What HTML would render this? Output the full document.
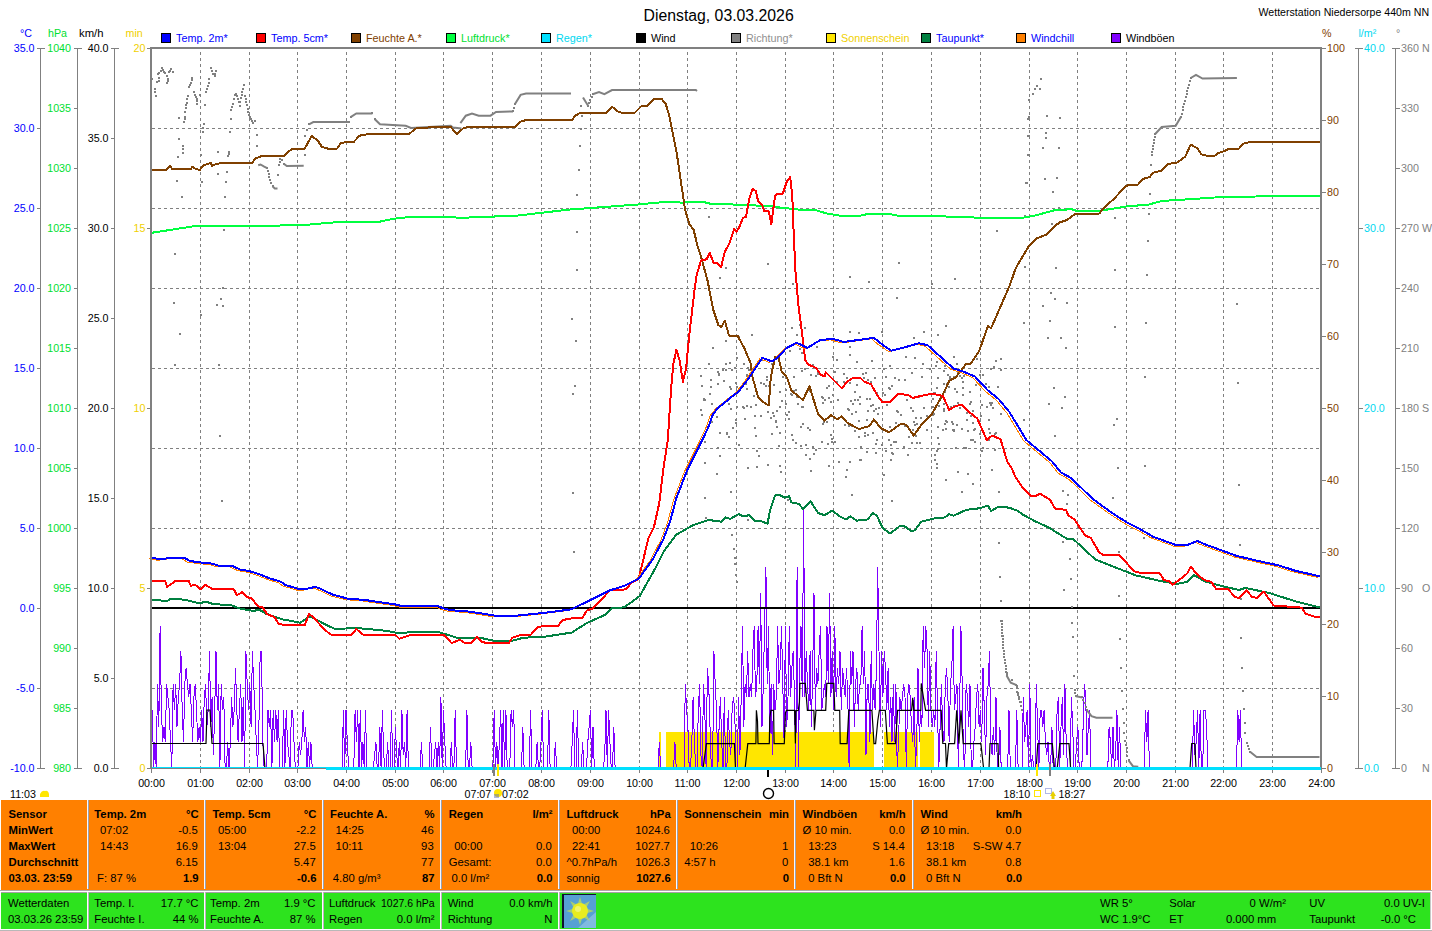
<!DOCTYPE html>
<html><head><meta charset="utf-8"><title>Wetterstation Niedersorpe</title>
<style>html,body{margin:0;padding:0;background:#fff;} body{width:1432px;height:931px;overflow:hidden;position:relative;} svg{position:absolute;left:0;top:0;}</style>
</head><body>
<svg width="1432" height="931" viewBox="0 0 1432 931">
<g shape-rendering="crispEdges">
<rect x="1" y="800" width="1430" height="90" fill="#FF8000"/>
<rect x="87" y="800" width="1" height="89" fill="#F8F8FF"/>
<rect x="88" y="800" width="1" height="89" fill="#98A0B0"/>
<rect x="204" y="800" width="1" height="89" fill="#F8F8FF"/>
<rect x="205" y="800" width="1" height="89" fill="#98A0B0"/>
<rect x="322" y="800" width="1" height="89" fill="#F8F8FF"/>
<rect x="323" y="800" width="1" height="89" fill="#98A0B0"/>
<rect x="440" y="800" width="1" height="89" fill="#F8F8FF"/>
<rect x="441" y="800" width="1" height="89" fill="#98A0B0"/>
<rect x="558" y="800" width="1" height="89" fill="#F8F8FF"/>
<rect x="559" y="800" width="1" height="89" fill="#98A0B0"/>
<rect x="676" y="800" width="1" height="89" fill="#F8F8FF"/>
<rect x="677" y="800" width="1" height="89" fill="#98A0B0"/>
<rect x="794" y="800" width="1" height="89" fill="#F8F8FF"/>
<rect x="795" y="800" width="1" height="89" fill="#98A0B0"/>
<rect x="912" y="800" width="1" height="89" fill="#F8F8FF"/>
<rect x="913" y="800" width="1" height="89" fill="#98A0B0"/>
<rect x="0" y="890" width="1432" height="1" fill="#B0A8A8"/>
<rect x="0" y="891" width="1432" height="40" fill="#FFFFFF"/>
<rect x="0" y="930" width="1432" height="1" fill="#B8B8B8"/>
<rect x="1" y="892" width="86" height="1" fill="#A8A0A8"/>
<rect x="1" y="893" width="86" height="36" fill="#2DE31E"/>
<rect x="89" y="892" width="115" height="1" fill="#A8A0A8"/>
<rect x="89" y="893" width="115" height="36" fill="#2DE31E"/>
<rect x="206" y="892" width="116" height="1" fill="#A8A0A8"/>
<rect x="206" y="893" width="116" height="36" fill="#2DE31E"/>
<rect x="324" y="892" width="116" height="1" fill="#A8A0A8"/>
<rect x="324" y="893" width="116" height="36" fill="#2DE31E"/>
<rect x="442" y="892" width="116" height="1" fill="#A8A0A8"/>
<rect x="442" y="893" width="116" height="36" fill="#2DE31E"/>
<rect x="560" y="892" width="870" height="1" fill="#A8A0A8"/>
<rect x="560" y="893" width="870" height="36" fill="#2DE31E"/>
<rect x="88" y="892" width="1" height="37" fill="#C0B0C0"/>
<rect x="205" y="892" width="1" height="37" fill="#C0B0C0"/>
<rect x="323" y="892" width="1" height="37" fill="#C0B0C0"/>
<rect x="441" y="892" width="1" height="37" fill="#C0B0C0"/>
<rect x="559" y="892" width="1" height="37" fill="#C0B0C0"/>
<rect x="1430" y="892" width="1" height="37" fill="#C8C8C8"/>
</g>
<g font-family='"Liberation Sans", sans-serif' fill="#000">
<text x="8.5" y="818" text-anchor="start" font-size="11.3" font-weight="bold">Sensor</text>
<text x="8.5" y="834" text-anchor="start" font-size="11.3" font-weight="bold">MinWert</text>
<text x="8.5" y="850" text-anchor="start" font-size="11.3" font-weight="bold">MaxWert</text>
<text x="8.5" y="866" text-anchor="start" font-size="11.3" font-weight="bold">Durchschnitt</text>
<text x="8.5" y="882" text-anchor="start" font-size="11.3" font-weight="bold">03.03. 23:59</text>
<text x="94.3" y="818" text-anchor="start" font-size="11.3" font-weight="bold">Temp. 2m</text>
<text x="198.6" y="818" text-anchor="end" font-size="11.3" font-weight="bold">°C</text>
<text x="99.89999999999999" y="834" text-anchor="start" font-size="11.3">07:02</text>
<text x="197.79999999999998" y="834" text-anchor="end" font-size="11.3">-0.5</text>
<text x="99.89999999999999" y="850" text-anchor="start" font-size="11.3">14:43</text>
<text x="197.79999999999998" y="850" text-anchor="end" font-size="11.3">16.9</text>
<text x="197.79999999999998" y="866" text-anchor="end" font-size="11.3">6.15</text>
<text x="97.1" y="882" text-anchor="start" font-size="11.3">F: 87 %</text>
<text x="198.6" y="882" text-anchor="end" font-size="11.3" font-weight="bold">1.9</text>
<text x="212.4" y="818" text-anchor="start" font-size="11.3" font-weight="bold">Temp. 5cm</text>
<text x="316.5" y="818" text-anchor="end" font-size="11.3" font-weight="bold">°C</text>
<text x="218.0" y="834" text-anchor="start" font-size="11.3">05:00</text>
<text x="315.7" y="834" text-anchor="end" font-size="11.3">-2.2</text>
<text x="218.0" y="850" text-anchor="start" font-size="11.3">13:04</text>
<text x="315.7" y="850" text-anchor="end" font-size="11.3">27.5</text>
<text x="315.7" y="866" text-anchor="end" font-size="11.3">5.47</text>
<text x="316.5" y="882" text-anchor="end" font-size="11.3" font-weight="bold">-0.6</text>
<text x="330" y="818" text-anchor="start" font-size="11.3" font-weight="bold">Feuchte A.</text>
<text x="434.5" y="818" text-anchor="end" font-size="11.3" font-weight="bold">%</text>
<text x="335.6" y="834" text-anchor="start" font-size="11.3">14:25</text>
<text x="433.7" y="834" text-anchor="end" font-size="11.3">46</text>
<text x="335.6" y="850" text-anchor="start" font-size="11.3">10:11</text>
<text x="433.7" y="850" text-anchor="end" font-size="11.3">93</text>
<text x="433.7" y="866" text-anchor="end" font-size="11.3">77</text>
<text x="332.8" y="882" text-anchor="start" font-size="11.3">4.80 g/m³</text>
<text x="434.5" y="882" text-anchor="end" font-size="11.3" font-weight="bold">87</text>
<text x="448.7" y="818" text-anchor="start" font-size="11.3" font-weight="bold">Regen</text>
<text x="552.5" y="818" text-anchor="end" font-size="11.3" font-weight="bold">l/m²</text>
<text x="454.3" y="850" text-anchor="start" font-size="11.3">00:00</text>
<text x="551.7" y="850" text-anchor="end" font-size="11.3">0.0</text>
<text x="448.7" y="866" text-anchor="start" font-size="11.3">Gesamt:</text>
<text x="551.7" y="866" text-anchor="end" font-size="11.3">0.0</text>
<text x="451.5" y="882" text-anchor="start" font-size="11.3">0.0 l/m²</text>
<text x="552.5" y="882" text-anchor="end" font-size="11.3" font-weight="bold">0.0</text>
<text x="566.4" y="818" text-anchor="start" font-size="11.3" font-weight="bold">Luftdruck</text>
<text x="670.7" y="818" text-anchor="end" font-size="11.3" font-weight="bold">hPa</text>
<text x="572.0" y="834" text-anchor="start" font-size="11.3">00:00</text>
<text x="669.9000000000001" y="834" text-anchor="end" font-size="11.3">1024.6</text>
<text x="572.0" y="850" text-anchor="start" font-size="11.3">22:41</text>
<text x="669.9000000000001" y="850" text-anchor="end" font-size="11.3">1027.7</text>
<text x="566.4" y="866" text-anchor="start" font-size="11.3">^0.7hPa/h</text>
<text x="669.9000000000001" y="866" text-anchor="end" font-size="11.3">1026.3</text>
<text x="566.4" y="882" text-anchor="start" font-size="11.3">sonnig</text>
<text x="670.7" y="882" text-anchor="end" font-size="11.3" font-weight="bold">1027.6</text>
<text x="684.2" y="818" text-anchor="start" font-size="11.3" font-weight="bold">Sonnenschein</text>
<text x="789" y="818" text-anchor="end" font-size="11.3" font-weight="bold">min</text>
<text x="689.8000000000001" y="850" text-anchor="start" font-size="11.3">10:26</text>
<text x="788.2" y="850" text-anchor="end" font-size="11.3">1</text>
<text x="684.2" y="866" text-anchor="start" font-size="11.3">4:57 h</text>
<text x="788.2" y="866" text-anchor="end" font-size="11.3">0</text>
<text x="789" y="882" text-anchor="end" font-size="11.3" font-weight="bold">0</text>
<text x="802.6" y="818" text-anchor="start" font-size="11.3" font-weight="bold">Windböen</text>
<text x="905.6" y="818" text-anchor="end" font-size="11.3" font-weight="bold">km/h</text>
<text x="802.6" y="834" text-anchor="start" font-size="11.3">Ø 10 min.</text>
<text x="904.8000000000001" y="834" text-anchor="end" font-size="11.3">0.0</text>
<text x="808.2" y="850" text-anchor="start" font-size="11.3">13:23</text>
<text x="904.8000000000001" y="850" text-anchor="end" font-size="11.3">S 14.4</text>
<text x="808.2" y="866" text-anchor="start" font-size="11.3">38.1 km</text>
<text x="904.8000000000001" y="866" text-anchor="end" font-size="11.3">1.6</text>
<text x="808.2" y="882" text-anchor="start" font-size="11.3">0 Bft N</text>
<text x="905.6" y="882" text-anchor="end" font-size="11.3" font-weight="bold">0.0</text>
<text x="920.5" y="818" text-anchor="start" font-size="11.3" font-weight="bold">Wind</text>
<text x="1022" y="818" text-anchor="end" font-size="11.3" font-weight="bold">km/h</text>
<text x="920.5" y="834" text-anchor="start" font-size="11.3">Ø 10 min.</text>
<text x="1021.2" y="834" text-anchor="end" font-size="11.3">0.0</text>
<text x="926.1" y="850" text-anchor="start" font-size="11.3">13:18</text>
<text x="1021.2" y="850" text-anchor="end" font-size="11.3">S-SW 4.7</text>
<text x="926.1" y="866" text-anchor="start" font-size="11.3">38.1 km</text>
<text x="1021.2" y="866" text-anchor="end" font-size="11.3">0.8</text>
<text x="926.1" y="882" text-anchor="start" font-size="11.3">0 Bft N</text>
<text x="1022" y="882" text-anchor="end" font-size="11.3" font-weight="bold">0.0</text>
<text x="8" y="907" text-anchor="start" font-size="11.3">Wetterdaten</text>
<text x="8" y="922.5" text-anchor="start" font-size="11.3">03.03.26 23:59</text>
<text x="94.3" y="907" text-anchor="start" font-size="11.3">Temp. I.</text>
<text x="198.5" y="907" text-anchor="end" font-size="11.3">17.7 °C</text>
<text x="94.3" y="922.5" text-anchor="start" font-size="11.3">Feuchte I.</text>
<text x="198.5" y="922.5" text-anchor="end" font-size="11.3">44 %</text>
<text x="210" y="907" text-anchor="start" font-size="11.3">Temp. 2m</text>
<text x="315.5" y="907" text-anchor="end" font-size="11.3">1.9 °C</text>
<text x="210" y="922.5" text-anchor="start" font-size="11.3">Feuchte A.</text>
<text x="315.5" y="922.5" text-anchor="end" font-size="11.3">87 %</text>
<text x="329" y="907" text-anchor="start" font-size="11.3">Luftdruck</text>
<text x="381" y="907" font-size="11.3" textLength="53.5" lengthAdjust="spacingAndGlyphs">1027.6 hPa</text>
<text x="329" y="922.5" text-anchor="start" font-size="11.3">Regen</text>
<text x="434.5" y="922.5" text-anchor="end" font-size="11.3">0.0 l/m²</text>
<text x="447.7" y="907" text-anchor="start" font-size="11.3">Wind</text>
<text x="552.5" y="907" text-anchor="end" font-size="11.3">0.0 km/h</text>
<text x="447.7" y="922.5" text-anchor="start" font-size="11.3">Richtung</text>
<text x="552.5" y="922.5" text-anchor="end" font-size="11.3">N</text>
<text x="1100" y="907" text-anchor="start" font-size="11.3">WR 5°</text>
<text x="1100" y="922.5" text-anchor="start" font-size="11.3">WC 1.9°C</text>
<text x="1169.2" y="907" text-anchor="start" font-size="11.3">Solar</text>
<text x="1286" y="907" text-anchor="end" font-size="11.3">0 W/m²</text>
<text x="1169.2" y="922.5" text-anchor="start" font-size="11.3">ET</text>
<text x="1276.2" y="922.5" text-anchor="end" font-size="11.3">0.000 mm</text>
<text x="1309.3" y="907" text-anchor="start" font-size="11.3">UV</text>
<text x="1424.8" y="907" text-anchor="end" font-size="11.3">0.0 UV-I</text>
<text x="1309.3" y="922.5" text-anchor="start" font-size="11.3">Taupunkt</text>
<text x="1416" y="922.5" text-anchor="end" font-size="11.3">-0.0 °C</text>
</g>
<g>
<rect x="562" y="894" width="34" height="34" fill="#56A0D4"/><path d="M596,912 L596,928 L578,928 Z" fill="#9CCBEA" opacity="0.6"/>
<rect x="562" y="894" width="2" height="34" fill="#101030"/>
<rect x="562" y="894" width="34" height="1" fill="#101030"/>
<polygon points="580.0,897.0 582.5,905.0 589.9,901.1 586.0,908.5 594.0,911.0 586.0,913.5 589.9,920.9 582.5,917.0 580.0,925.0 577.5,917.0 570.1,920.9 574.0,913.5 566.0,911.0 574.0,908.5 570.1,901.1 577.5,905.0" fill="#B8D860" opacity="0.8"/>
<circle cx="580" cy="911" r="8" fill="#E8EC20"/>
<circle cx="578" cy="909" r="3" fill="#F4F890" opacity="0.7"/>
</g>
<g stroke="#808080" stroke-width="1" shape-rendering="crispEdges" stroke-dasharray="3 3">
<line x1="152" y1="128.5" x2="1320" y2="128.5"/>
<line x1="152" y1="208.5" x2="1320" y2="208.5"/>
<line x1="152" y1="288.5" x2="1320" y2="288.5"/>
<line x1="152" y1="368.5" x2="1320" y2="368.5"/>
<line x1="152" y1="448.5" x2="1320" y2="448.5"/>
<line x1="152" y1="528.5" x2="1320" y2="528.5"/>
<line x1="152" y1="608.5" x2="1320" y2="608.5"/>
<line x1="152" y1="688.5" x2="1320" y2="688.5"/>
<line x1="200.5" y1="52" x2="200.5" y2="773"/>
<line x1="249.5" y1="52" x2="249.5" y2="773"/>
<line x1="297.5" y1="52" x2="297.5" y2="773"/>
<line x1="346.5" y1="52" x2="346.5" y2="773"/>
<line x1="395.5" y1="52" x2="395.5" y2="773"/>
<line x1="443.5" y1="52" x2="443.5" y2="773"/>
<line x1="492.5" y1="52" x2="492.5" y2="773"/>
<line x1="541.5" y1="52" x2="541.5" y2="773"/>
<line x1="590.5" y1="52" x2="590.5" y2="773"/>
<line x1="639.5" y1="52" x2="639.5" y2="773"/>
<line x1="687.5" y1="52" x2="687.5" y2="773"/>
<line x1="736.5" y1="52" x2="736.5" y2="773"/>
<line x1="785.5" y1="52" x2="785.5" y2="773"/>
<line x1="833.5" y1="52" x2="833.5" y2="773"/>
<line x1="882.5" y1="52" x2="882.5" y2="773"/>
<line x1="931.5" y1="52" x2="931.5" y2="773"/>
<line x1="980.5" y1="52" x2="980.5" y2="773"/>
<line x1="1029.5" y1="52" x2="1029.5" y2="773"/>
<line x1="1077.5" y1="52" x2="1077.5" y2="773"/>
<line x1="1126.5" y1="52" x2="1126.5" y2="773"/>
<line x1="1175.5" y1="52" x2="1175.5" y2="773"/>
<line x1="1223.5" y1="52" x2="1223.5" y2="773"/>
<line x1="1272.5" y1="52" x2="1272.5" y2="773"/>
</g>
<g fill="#FFE600" shape-rendering="crispEdges">
<rect x="659" y="732" width="2" height="36"/>
<rect x="666" y="732" width="208" height="36"/>
<rect x="884" y="732" width="34" height="36"/>
<rect x="920" y="732" width="14" height="36"/>
</g>
<polyline fill="none" stroke="#8000FF" stroke-width="1" shape-rendering="crispEdges" points="151.0,742.0 152.3,710.0 153.6,768.0 154.9,742.0 156.2,768.0 157.5,684.0 158.8,727.0 160.1,626.0 161.4,710.0 162.7,742.0 164.0,727.0 165.3,742.0 166.6,684.0 167.9,697.0 169.2,710.0 170.5,742.0 171.8,768.0 173.1,684.0 174.4,710.0 175.7,684.0 177.0,727.0 178.3,697.0 179.6,684.0 180.9,651.0 182.2,710.0 183.5,742.0 184.8,684.0 186.1,668.0 187.4,684.0 188.7,697.0 190.0,684.0 191.3,710.0 192.6,742.0 193.9,697.0 195.2,684.0 196.5,710.0 197.8,742.0 199.1,727.0 200.4,742.0 201.7,710.0 203.0,742.0 204.3,697.0 205.6,684.0 206.9,727.0 208.2,710.0 209.5,651.0 210.8,727.0 212.1,697.0 213.4,755.0 214.7,710.0 216.0,651.0 217.3,710.0 218.6,684.0 219.9,768.0 221.2,684.0 222.5,710.0 223.8,697.0 225.1,768.0 226.4,768.0 227.7,742.0 229.0,768.0 230.3,742.0 231.6,697.0 232.9,727.0 234.2,710.0 235.5,668.0 236.8,710.0 238.1,742.0 239.4,710.0 240.7,684.0 242.0,742.0 243.3,697.0 244.6,768.0 245.9,651.0 247.2,684.0 248.5,710.0 249.8,684.0 251.1,727.0 252.4,651.0 253.7,684.0 255.0,710.0 256.3,742.0 257.6,768.0 258.9,727.0 260.2,651.0 261.5,651.0 262.8,742.0 264.1,768.0 265.4,768.0 266.7,768.0 268.0,710.0 269.3,727.0 270.6,710.0 271.9,768.0 273.2,710.0 274.5,742.0 275.8,710.0 277.1,742.0 278.4,710.0 279.7,768.0 281.0,768.0 282.3,768.0 283.6,710.0 284.9,768.0 286.2,710.0 287.5,742.0 288.8,755.0 290.1,768.0 291.4,710.0 292.7,710.0 294.0,742.0 295.3,768.0 296.6,768.0 297.9,768.0 299.2,742.0 300.5,755.0 301.8,742.0 303.1,710.0 304.4,742.0 305.7,727.0 307.0,768.0 308.3,742.0 309.6,768.0 310.9,742.0 312.2,768.0 313.5,768.0 314.8,768.0 316.1,768.0 317.4,768.0 318.7,768.0 320.0,768.0 321.3,768.0 322.6,768.0 323.9,768.0 325.2,768.0 326.5,768.0 327.8,768.0 329.1,768.0 330.4,768.0 331.7,768.0 333.0,768.0 334.3,768.0 335.6,768.0 336.9,768.0 338.2,768.0 339.5,768.0 340.8,768.0 342.1,768.0 343.4,710.0 344.7,768.0 346.0,710.0 347.3,742.0 348.6,768.0 349.9,768.0 351.2,768.0 352.5,768.0 353.8,768.0 355.1,710.0 356.4,742.0 357.7,710.0 359.0,768.0 360.3,710.0 361.6,768.0 362.9,742.0 364.2,768.0 365.5,710.0 366.8,768.0 368.1,768.0 369.4,768.0 370.7,768.0 372.0,768.0 373.3,768.0 374.6,755.0 375.9,742.0 377.2,768.0 378.5,768.0 379.8,727.0 381.1,768.0 382.4,710.0 383.7,755.0 385.0,768.0 386.3,768.0 387.6,742.0 388.9,768.0 390.2,768.0 391.5,710.0 392.8,768.0 394.1,768.0 395.4,727.0 396.7,755.0 398.0,768.0 399.3,742.0 400.6,768.0 401.9,710.0 403.2,755.0 404.5,742.0 405.8,768.0 407.1,710.0 408.4,768.0 409.7,768.0 411.0,768.0 412.3,768.0 413.6,768.0 414.9,768.0 416.2,768.0 417.5,768.0 418.8,768.0 420.1,768.0 421.4,742.0 422.7,768.0 424.0,768.0 425.3,768.0 426.6,768.0 427.9,768.0 429.2,768.0 430.5,727.0 431.8,768.0 433.1,768.0 434.4,755.0 435.7,742.0 437.0,768.0 438.3,742.0 439.6,768.0 440.9,697.0 442.2,768.0 443.5,710.0 444.8,742.0 446.1,768.0 447.4,768.0 448.7,768.0 450.0,768.0 451.3,742.0 452.6,768.0 453.9,768.0 455.2,710.0 456.5,768.0 457.8,768.0 459.1,768.0 460.4,768.0 461.7,768.0 463.0,768.0 464.3,768.0 465.6,768.0 466.9,710.0 468.2,768.0 469.5,768.0 470.8,742.0 472.1,768.0 473.4,768.0 474.7,768.0 476.0,768.0 477.3,768.0 478.6,768.0 479.9,768.0 481.2,768.0 482.5,768.0 483.8,768.0 485.1,768.0 486.4,768.0 487.7,768.0 489.0,768.0 490.3,768.0 491.6,768.0 492.9,768.0 494.2,710.0 495.5,768.0 496.8,742.0 498.1,768.0 499.4,742.0 500.7,710.0 502.0,768.0 503.3,710.0 504.6,768.0 505.9,710.0 507.2,768.0 508.5,768.0 509.8,768.0 511.1,710.0 512.4,727.0 513.7,710.0 515.0,768.0 516.3,768.0 517.6,768.0 518.9,768.0 520.2,768.0 521.5,768.0 522.8,727.0 524.1,768.0 525.4,768.0 526.7,768.0 528.0,768.0 529.3,768.0 530.6,710.0 531.9,768.0 533.2,768.0 534.5,768.0 535.8,768.0 537.1,742.0 538.4,768.0 539.7,768.0 541.0,742.0 542.3,710.0 543.6,768.0 544.9,768.0 546.2,768.0 547.5,768.0 548.8,710.0 550.1,768.0 551.4,768.0 552.7,768.0 554.0,768.0 555.3,742.0 556.6,768.0 557.9,768.0 559.2,768.0 560.5,768.0 561.8,768.0 563.1,768.0 564.4,768.0 565.7,768.0 567.0,768.0 568.3,768.0 569.6,768.0 570.9,768.0 572.2,742.0 573.5,710.0 574.8,768.0 576.1,768.0 577.4,710.0 578.7,768.0 580.0,768.0 581.3,768.0 582.6,742.0 583.9,768.0 585.2,768.0 586.5,768.0 587.8,742.0 589.1,727.0 590.4,710.0 591.7,768.0 593.0,727.0 594.3,768.0 595.6,768.0 596.9,768.0 598.2,768.0 599.5,768.0 600.8,768.0 602.1,768.0 603.4,768.0 604.7,755.0 606.0,710.0 607.3,768.0 608.6,710.0 609.9,742.0 611.2,768.0 612.5,768.0 613.8,727.0 615.1,768.0 616.4,768.0 617.7,768.0 619.0,768.0 620.3,768.0 621.6,768.0 622.9,768.0 624.2,768.0 625.5,768.0 626.8,768.0 628.1,768.0 629.4,768.0 630.7,768.0 632.0,768.0 633.3,768.0 634.6,768.0 635.9,768.0 637.2,768.0 638.5,768.0 639.8,768.0 641.1,768.0 642.4,768.0 643.7,768.0 645.0,768.0 646.3,768.0 647.6,768.0 648.9,768.0 650.2,768.0 651.5,768.0 652.8,768.0 654.1,768.0 655.4,768.0 656.7,768.0 658.0,768.0 659.3,742.0 660.6,768.0 661.9,768.0 663.2,768.0 664.5,768.0 665.8,768.0 667.1,768.0 668.4,768.0 669.7,768.0 671.0,768.0 672.3,768.0 673.6,768.0 674.9,742.0 676.2,768.0 677.5,768.0 678.8,768.0 680.1,768.0 681.4,768.0 682.7,768.0 684.0,768.0 685.3,684.0 686.6,710.0 687.9,727.0 689.2,768.0 690.5,768.0 691.8,742.0 693.1,697.0 694.4,742.0 695.7,768.0 697.0,768.0 698.3,710.0 699.6,684.0 700.9,755.0 702.2,768.0 703.5,684.0 704.8,710.0 706.1,768.0 707.4,668.0 708.7,684.0 710.0,727.0 711.3,768.0 712.6,768.0 713.9,651.0 715.2,684.0 716.5,710.0 717.8,768.0 719.1,727.0 720.4,697.0 721.7,742.0 723.0,768.0 724.3,697.0 725.6,768.0 726.9,768.0 728.2,710.0 729.5,742.0 730.8,755.0 732.1,710.0 733.4,697.0 734.7,710.0 736.0,768.0 737.3,768.0 738.6,697.0 739.9,755.0 741.2,697.0 742.5,626.0 743.8,727.0 745.1,684.0 746.4,697.0 747.7,651.0 749.0,697.0 750.3,684.0 751.6,697.0 752.9,651.0 754.2,626.0 755.5,697.0 756.8,684.0 758.1,626.0 759.4,684.0 760.7,593.0 762.0,727.0 763.3,684.0 764.6,626.0 765.9,567.0 767.2,684.0 768.5,626.0 769.8,742.0 771.1,684.0 772.4,755.0 773.7,684.0 775.0,710.0 776.3,697.0 777.6,626.0 778.9,684.0 780.2,668.0 781.5,626.0 782.8,684.0 784.1,742.0 785.4,626.0 786.7,727.0 788.0,697.0 789.3,626.0 790.6,697.0 791.9,668.0 793.2,651.0 794.5,697.0 795.8,768.0 797.1,567.0 798.4,768.0 799.7,668.0 801.0,626.0 802.3,697.0 803.6,509.0 804.9,697.0 806.2,651.0 807.5,684.0 808.8,710.0 810.1,651.0 811.4,727.0 812.7,668.0 814.0,593.0 815.3,710.0 816.6,668.0 817.9,684.0 819.2,651.0 820.5,626.0 821.8,710.0 823.1,697.0 824.4,684.0 825.7,697.0 827.0,626.0 828.3,684.0 829.6,593.0 830.9,697.0 832.2,651.0 833.5,710.0 834.8,626.0 836.1,697.0 837.4,668.0 838.7,684.0 840.0,651.0 841.3,710.0 842.6,668.0 843.9,684.0 845.2,697.0 846.5,668.0 847.8,697.0 849.1,768.0 850.4,651.0 851.7,684.0 853.0,651.0 854.3,727.0 855.6,684.0 856.9,668.0 858.2,710.0 859.5,684.0 860.8,684.0 862.1,626.0 863.4,684.0 864.7,651.0 866.0,755.0 867.3,684.0 868.6,684.0 869.9,742.0 871.2,651.0 872.5,710.0 873.8,684.0 875.1,710.0 876.4,668.0 877.7,567.0 879.0,651.0 880.3,727.0 881.6,651.0 882.9,697.0 884.2,651.0 885.5,668.0 886.8,710.0 888.1,668.0 889.4,727.0 890.7,697.0 892.0,742.0 893.3,684.0 894.6,742.0 895.9,684.0 897.2,768.0 898.5,742.0 899.8,697.0 901.1,710.0 902.4,697.0 903.7,684.0 905.0,697.0 906.3,768.0 907.6,697.0 908.9,684.0 910.2,697.0 911.5,727.0 912.8,742.0 914.1,697.0 915.4,768.0 916.7,742.0 918.0,668.0 919.3,742.0 920.6,710.0 921.9,727.0 923.2,626.0 924.5,668.0 925.8,626.0 927.1,651.0 928.4,727.0 929.7,651.0 931.0,710.0 932.3,727.0 933.6,710.0 934.9,727.0 936.2,651.0 937.5,710.0 938.8,768.0 940.1,727.0 941.4,684.0 942.7,727.0 944.0,742.0 945.3,684.0 946.6,668.0 947.9,697.0 949.2,742.0 950.5,684.0 951.8,668.0 953.1,626.0 954.4,710.0 955.7,697.0 957.0,684.0 958.3,768.0 959.6,710.0 960.9,626.0 962.2,684.0 963.5,755.0 964.8,768.0 966.1,684.0 967.4,697.0 968.7,727.0 970.0,684.0 971.3,768.0 972.6,768.0 973.9,742.0 975.2,727.0 976.5,697.0 977.8,684.0 979.1,727.0 980.4,710.0 981.7,742.0 983.0,668.0 984.3,710.0 985.6,755.0 986.9,697.0 988.2,684.0 989.5,651.0 990.8,742.0 992.1,755.0 993.4,727.0 994.7,755.0 996.0,697.0 997.3,768.0 998.6,768.0 999.9,727.0 1001.2,768.0 1002.5,768.0 1003.8,768.0 1005.1,768.0 1006.4,768.0 1007.7,768.0 1009.0,710.0 1010.3,768.0 1011.6,768.0 1012.9,768.0 1014.2,768.0 1015.5,768.0 1016.8,710.0 1018.1,768.0 1019.4,768.0 1020.7,768.0 1022.0,768.0 1023.3,697.0 1024.6,742.0 1025.9,727.0 1027.2,710.0 1028.5,768.0 1029.8,684.0 1031.1,768.0 1032.4,755.0 1033.7,768.0 1035.0,768.0 1036.3,684.0 1037.6,727.0 1038.9,768.0 1040.2,710.0 1041.5,710.0 1042.8,727.0 1044.1,710.0 1045.4,742.0 1046.7,755.0 1048.0,742.0 1049.3,768.0 1050.6,768.0 1051.9,727.0 1053.2,768.0 1054.5,768.0 1055.8,768.0 1057.1,710.0 1058.4,697.0 1059.7,768.0 1061.0,727.0 1062.3,697.0 1063.6,755.0 1064.9,684.0 1066.2,742.0 1067.5,768.0 1068.8,768.0 1070.1,768.0 1071.4,697.0 1072.7,727.0 1074.0,768.0 1075.3,768.0 1076.6,742.0 1077.9,727.0 1079.2,768.0 1080.5,768.0 1081.8,768.0 1083.1,727.0 1084.4,684.0 1085.7,697.0 1087.0,755.0 1088.3,727.0 1089.6,710.0 1090.9,768.0 1092.2,768.0 1093.5,768.0 1094.8,768.0 1096.1,768.0 1097.4,768.0 1098.7,768.0 1100.0,768.0 1101.3,768.0 1102.6,768.0 1103.9,768.0 1105.2,768.0 1106.5,768.0 1107.8,768.0 1109.1,727.0 1110.4,742.0 1111.7,768.0 1113.0,727.0 1114.3,768.0 1115.6,755.0 1116.9,710.0 1118.2,768.0 1119.5,727.0 1120.8,768.0 1122.1,768.0 1123.4,768.0 1124.7,768.0 1126.0,768.0 1127.3,768.0 1128.6,768.0 1129.9,768.0 1131.2,768.0 1132.5,768.0 1133.8,768.0 1135.1,768.0 1136.4,768.0 1137.7,768.0 1139.0,768.0 1140.3,768.0 1141.6,768.0 1142.9,768.0 1144.2,768.0 1145.5,710.0 1146.8,742.0 1148.1,710.0 1149.4,768.0 1150.7,768.0 1152.0,768.0 1153.3,768.0 1154.6,768.0 1155.9,768.0 1157.2,768.0 1158.5,768.0 1159.8,768.0 1161.1,768.0 1162.4,768.0 1163.7,768.0 1165.0,768.0 1166.3,768.0 1167.6,768.0 1168.9,768.0 1170.2,768.0 1171.5,768.0 1172.8,768.0 1174.1,768.0 1175.4,768.0 1176.7,768.0 1178.0,768.0 1179.3,768.0 1180.6,768.0 1181.9,768.0 1183.2,768.0 1184.5,768.0 1185.8,768.0 1187.1,768.0 1188.4,768.0 1189.7,768.0 1191.0,768.0 1192.3,768.0 1193.6,710.0 1194.9,755.0 1196.2,742.0 1197.5,710.0 1198.8,768.0 1200.1,710.0 1201.4,768.0 1202.7,768.0 1204.0,710.0 1205.3,710.0 1206.6,727.0 1207.9,768.0 1209.2,768.0 1210.5,768.0 1211.8,768.0 1213.1,768.0 1214.4,768.0 1215.7,768.0 1217.0,768.0 1218.3,768.0 1219.6,768.0 1220.9,768.0 1222.2,768.0 1223.5,768.0 1224.8,768.0 1226.1,768.0 1227.4,768.0 1228.7,768.0 1230.0,768.0 1231.3,768.0 1232.6,768.0 1233.9,768.0 1235.2,768.0 1236.5,768.0 1237.8,710.0 1239.1,742.0 1240.4,710.0 1241.7,768.0 1243.0,768.0 1244.3,768.0 1245.6,768.0 1246.9,768.0 1248.2,768.0 1249.5,768.0 1250.8,768.0 1252.1,768.0 1253.4,768.0 1254.7,768.0 1256.0,768.0 1257.3,768.0 1258.6,768.0 1259.9,768.0 1261.2,768.0 1262.5,768.0 1263.8,768.0 1265.1,768.0 1266.4,768.0 1267.7,768.0 1269.0,768.0 1270.3,768.0 1271.6,768.0 1272.9,768.0 1274.2,768.0 1275.5,768.0 1276.8,768.0 1278.1,768.0 1279.4,768.0 1280.7,768.0 1282.0,768.0 1283.3,768.0 1284.6,768.0 1285.9,768.0 1287.2,768.0 1288.5,768.0 1289.8,768.0 1291.1,768.0 1292.4,768.0 1293.7,768.0 1295.0,768.0 1296.3,768.0 1297.6,768.0 1298.9,768.0 1300.2,768.0 1301.5,768.0 1302.8,768.0 1304.1,768.0 1305.4,768.0 1306.7,768.0 1308.0,768.0 1309.3,768.0 1310.6,768.0 1311.9,768.0 1313.2,768.0 1314.5,768.0 1315.8,768.0 1317.1,768.0 1318.4,768.0 1319.7,768.0 1321.0,768.0"/>
<polyline fill="none" stroke="#000" stroke-width="1.2" points="151.0,743.5 206.0,743.5 207.0,710.0 210.0,710.0 212.0,743.5 263.0,743.5 265.0,768.5 703.0,768.5 706.4,743.6 734.4,743.6 735.5,768.5 745.1,768.5 747.8,743.6 755.9,743.6 756.4,710.3 757.5,721.0 758.0,743.6 769.3,743.6 769.8,717.3 770.9,710.3 773.6,710.3 774.1,743.6 784.3,743.6 785.4,713.0 786.5,710.3 794.6,710.3 795.4,743.6 795.8,710.8 798.3,710.3 799.4,702.2 799.9,683.4 805.3,683.4 807.4,710.3 813.9,710.3 814.4,730.2 816.0,710.3 825.7,710.3 826.8,683.4 833.8,683.4 834.8,710.3 839.7,710.3 840.2,743.6 847.1,743.6 848.8,710.3 871.9,710.3 874.0,743.6 875.6,743.6 877.8,720.5 879.4,710.3 885.3,710.3 887.4,743.6 895.5,743.6 897.6,710.3 911.6,710.3 912.7,697.9 913.8,710.3 920.8,710.3 921.3,683.4 923.5,697.9 925.6,710.3 941.2,710.3 942.8,743.5 945.5,743.5 946.5,768.5 948.7,743.6 954.6,743.6 956.7,710.3 958.9,743.6 961.0,710.3 963.2,743.6 980.9,743.6 983.6,768.5 989.0,768.5 990.0,743.6 998.0,743.6 998.6,768.5 1036.2,768.5 1037.8,743.6 1052.3,743.6 1054.5,768.5 1057.2,768.5 1059.8,743.6 1069.0,743.6 1070.6,768.5 1190.0,768.5 1191.7,743.5 1194.8,743.5 1196.0,768.5 1320.0,768.5"/>
<rect x="152" y="607" width="1169" height="2" fill="#000" shape-rendering="crispEdges"/>
<polyline fill="none" stroke="#808080" stroke-width="2" points="258.2,165.2 260.5,164.5 264.2,166.7 267.2,168.2"/>
<polyline fill="none" stroke="#808080" stroke-width="2" points="272.5,186.3 274.8,188.5 277.5,188.5"/>
<polyline fill="none" stroke="#808080" stroke-width="2" points="283.8,163.7 286.8,166.0 303.7,165.8"/>
<polyline fill="none" stroke="#808080" stroke-width="2" points="309.0,124.3 313.3,122.1 348.8,122.1"/>
<polyline fill="none" stroke="#808080" stroke-width="2" points="351.0,116.8 356.3,113.5 372.4,113.5"/>
<polyline fill="none" stroke="#808080" stroke-width="2" points="374.6,119.0 380.0,124.3 405.7,125.8 411.0,128.0 450.7,125.8 453.0,127.5 461.5,128.6"/>
<polyline fill="none" stroke="#808080" stroke-width="2" points="460.4,123.2 465.8,115.7 472.0,113.5 478.7,115.7 490.5,115.7 496.0,112.0 513.0,111.4"/>
<polyline fill="none" stroke="#808080" stroke-width="2" points="515.0,104.0 520.6,94.9 526.0,93.6 571.0,93.6"/>
<polyline fill="none" stroke="#808080" stroke-width="2" points="583.0,97.4 588.3,106.0"/>
<polyline fill="none" stroke="#808080" stroke-width="2" points="592.6,94.2 599.0,92.0 604.4,94.2 612.0,90.0 695.8,90.0 697.0,91.0"/>
<polyline fill="none" stroke="#808080" stroke-width="2" points="1155.2,134.0 1161.7,127.0 1175.7,125.8 1181.0,116.8"/>
<polyline fill="none" stroke="#808080" stroke-width="2" points="1190.7,78.0 1196.0,74.9 1202.5,78.5 1236.9,78.0"/>
<polyline fill="none" stroke="#808080" stroke-width="2" points="1006.6,675.4 1010.7,682.8 1016.0,684.9"/>
<polyline fill="none" stroke="#808080" stroke-width="2" points="1076.0,696.3 1082.4,697.4"/>
<polyline fill="none" stroke="#808080" stroke-width="2" points="1086.7,709.8 1091.5,716.2 1096.4,717.8 1112.5,717.8"/>
<polyline fill="none" stroke="#808080" stroke-width="2" points="1128.6,760.3 1132.9,766.2 1138.3,766.7"/>
<polyline fill="none" stroke="#808080" stroke-width="2" points="1250.4,752.0 1256.6,757.0 1319.5,757.0"/>
<g fill="#808080" shape-rendering="crispEdges">
<rect x="151" y="78" width="2" height="2"/>
<rect x="154" y="88" width="2" height="2"/>
<rect x="155" y="95" width="2" height="2"/>
<rect x="156" y="81" width="2" height="2"/>
<rect x="158" y="80" width="2" height="2"/>
<rect x="157" y="73" width="2" height="2"/>
<rect x="160" y="70" width="2" height="2"/>
<rect x="161" y="67" width="2" height="2"/>
<rect x="162" y="69" width="2" height="2"/>
<rect x="164" y="72" width="2" height="2"/>
<rect x="166" y="75" width="2" height="2"/>
<rect x="167" y="78" width="2" height="2"/>
<rect x="166" y="82" width="2" height="2"/>
<rect x="168" y="71" width="2" height="2"/>
<rect x="170" y="68" width="2" height="2"/>
<rect x="172" y="71" width="2" height="2"/>
<rect x="178" y="117" width="2" height="2"/>
<rect x="178" y="138" width="2" height="2"/>
<rect x="177" y="156" width="2" height="2"/>
<rect x="176" y="180" width="2" height="2"/>
<rect x="181" y="196" width="2" height="2"/>
<rect x="182" y="145" width="2" height="2"/>
<rect x="182" y="152" width="2" height="2"/>
<rect x="183" y="121" width="2" height="2"/>
<rect x="184" y="116" width="2" height="2"/>
<rect x="185" y="107" width="2" height="2"/>
<rect x="186" y="102" width="2" height="2"/>
<rect x="187" y="95" width="2" height="2"/>
<rect x="188" y="86" width="2" height="2"/>
<rect x="190" y="82" width="2" height="2"/>
<rect x="191" y="77" width="2" height="2"/>
<rect x="193" y="91" width="2" height="2"/>
<rect x="194" y="94" width="2" height="2"/>
<rect x="196" y="98" width="2" height="2"/>
<rect x="196" y="103" width="2" height="2"/>
<rect x="199" y="94" width="2" height="2"/>
<rect x="201" y="181" width="2" height="2"/>
<rect x="200" y="154" width="2" height="2"/>
<rect x="202" y="131" width="2" height="2"/>
<rect x="203" y="123" width="2" height="2"/>
<rect x="204" y="104" width="2" height="2"/>
<rect x="205" y="91" width="2" height="2"/>
<rect x="207" y="85" width="2" height="2"/>
<rect x="208" y="78" width="2" height="2"/>
<rect x="210" y="67" width="2" height="2"/>
<rect x="211" y="70" width="2" height="2"/>
<rect x="214" y="75" width="2" height="2"/>
<rect x="215" y="70" width="2" height="2"/>
<rect x="217" y="151" width="2" height="2"/>
<rect x="217" y="173" width="2" height="2"/>
<rect x="224" y="196" width="2" height="2"/>
<rect x="225" y="181" width="2" height="2"/>
<rect x="226" y="171" width="2" height="2"/>
<rect x="227" y="155" width="2" height="2"/>
<rect x="228" y="151" width="2" height="2"/>
<rect x="229" y="131" width="2" height="2"/>
<rect x="230" y="118" width="2" height="2"/>
<rect x="230" y="109" width="2" height="2"/>
<rect x="232" y="103" width="2" height="2"/>
<rect x="234" y="94" width="2" height="2"/>
<rect x="235" y="93" width="2" height="2"/>
<rect x="237" y="98" width="2" height="2"/>
<rect x="239" y="105" width="2" height="2"/>
<rect x="240" y="97" width="2" height="2"/>
<rect x="241" y="91" width="2" height="2"/>
<rect x="243" y="84" width="2" height="2"/>
<rect x="244" y="95" width="2" height="2"/>
<rect x="245" y="101" width="2" height="2"/>
<rect x="247" y="108" width="2" height="2"/>
<rect x="248" y="114" width="2" height="2"/>
<rect x="250" y="118" width="2" height="2"/>
<rect x="252" y="122" width="2" height="2"/>
<rect x="254" y="120" width="2" height="2"/>
<rect x="256" y="134" width="2" height="2"/>
<rect x="256" y="145" width="2" height="2"/>
<rect x="176" y="180" width="2" height="2"/>
<rect x="181" y="196" width="2" height="2"/>
<rect x="201" y="181" width="2" height="2"/>
<rect x="217" y="173" width="2" height="2"/>
<rect x="224" y="196" width="2" height="2"/>
<rect x="225" y="181" width="2" height="2"/>
<rect x="223" y="229" width="2" height="2"/>
<rect x="174" y="253" width="2" height="2"/>
<rect x="173" y="302" width="2" height="2"/>
<rect x="179" y="333" width="2" height="2"/>
<rect x="174" y="364" width="2" height="2"/>
<rect x="200" y="314" width="2" height="2"/>
<rect x="220" y="298" width="2" height="2"/>
<rect x="216" y="304" width="2" height="2"/>
<rect x="222" y="305" width="2" height="2"/>
<rect x="222" y="287" width="2" height="2"/>
<rect x="218" y="364" width="2" height="2"/>
<rect x="219" y="435" width="2" height="2"/>
<rect x="221" y="500" width="2" height="2"/>
<rect x="304" y="154" width="2" height="2"/>
<rect x="304" y="135" width="2" height="2"/>
<rect x="277" y="174" width="2" height="2"/>
<rect x="580" y="105" width="2" height="2"/>
<rect x="581" y="115" width="2" height="2"/>
<rect x="580" y="128" width="2" height="2"/>
<rect x="579" y="145" width="2" height="2"/>
<rect x="578" y="169" width="2" height="2"/>
<rect x="576" y="194" width="2" height="2"/>
<rect x="576" y="231" width="2" height="2"/>
<rect x="576" y="269" width="2" height="2"/>
<rect x="571" y="318" width="2" height="2"/>
<rect x="575" y="340" width="2" height="2"/>
<rect x="574" y="385" width="2" height="2"/>
<rect x="572" y="393" width="2" height="2"/>
<rect x="572" y="492" width="2" height="2"/>
<rect x="573" y="551" width="2" height="2"/>
<rect x="708" y="216" width="2" height="2"/>
<rect x="1027" y="118" width="2" height="2"/>
<rect x="1027" y="135" width="2" height="2"/>
<rect x="1027" y="154" width="2" height="2"/>
<rect x="1026" y="182" width="2" height="2"/>
<rect x="996" y="230" width="2" height="2"/>
<rect x="1024" y="215" width="2" height="2"/>
<rect x="998" y="542" width="2" height="2"/>
<rect x="999" y="576" width="2" height="2"/>
<rect x="1000" y="600" width="2" height="2"/>
<rect x="1001" y="620" width="2" height="2"/>
<rect x="1002" y="635" width="2" height="2"/>
<rect x="730" y="491" width="2" height="2"/>
<rect x="731" y="534" width="2" height="2"/>
<rect x="733" y="548" width="2" height="2"/>
<rect x="734" y="557" width="2" height="2"/>
<rect x="734" y="563" width="2" height="2"/>
<rect x="735" y="574" width="2" height="2"/>
<rect x="736" y="581" width="2" height="2"/>
<rect x="1028" y="99" width="2" height="2"/>
<rect x="1032" y="93" width="2" height="2"/>
<rect x="1034" y="88" width="2" height="2"/>
<rect x="1036" y="85" width="2" height="2"/>
<rect x="1039" y="88" width="2" height="2"/>
<rect x="1040" y="78" width="2" height="2"/>
<rect x="1046" y="115" width="2" height="2"/>
<rect x="1059" y="117" width="2" height="2"/>
<rect x="1028" y="116" width="2" height="2"/>
<rect x="1028" y="135" width="2" height="2"/>
<rect x="1045" y="132" width="2" height="2"/>
<rect x="1045" y="137" width="2" height="2"/>
<rect x="1042" y="147" width="2" height="2"/>
<rect x="1058" y="147" width="2" height="2"/>
<rect x="1028" y="154" width="2" height="2"/>
<rect x="1044" y="178" width="2" height="2"/>
<rect x="1056" y="177" width="2" height="2"/>
<rect x="1025" y="182" width="2" height="2"/>
<rect x="1052" y="191" width="2" height="2"/>
<rect x="1058" y="207" width="2" height="2"/>
<rect x="1024" y="215" width="2" height="2"/>
<rect x="1114" y="217" width="2" height="2"/>
<rect x="1051" y="223" width="2" height="2"/>
<rect x="1150" y="164" width="2" height="2"/>
<rect x="1149" y="193" width="2" height="2"/>
<rect x="1148" y="213" width="2" height="2"/>
<rect x="1147" y="240" width="2" height="2"/>
<rect x="1024" y="266" width="2" height="2"/>
<rect x="1055" y="267" width="2" height="2"/>
<rect x="1114" y="269" width="2" height="2"/>
<rect x="1146" y="274" width="2" height="2"/>
<rect x="1147" y="240" width="2" height="2"/>
<rect x="1050" y="292" width="2" height="2"/>
<rect x="1054" y="298" width="2" height="2"/>
<rect x="1042" y="305" width="2" height="2"/>
<rect x="1066" y="302" width="2" height="2"/>
<rect x="1236" y="303" width="2" height="2"/>
<rect x="1023" y="322" width="2" height="2"/>
<rect x="1049" y="320" width="2" height="2"/>
<rect x="1114" y="326" width="2" height="2"/>
<rect x="1145" y="322" width="2" height="2"/>
<rect x="1047" y="337" width="2" height="2"/>
<rect x="1060" y="337" width="2" height="2"/>
<rect x="1065" y="347" width="2" height="2"/>
<rect x="1144" y="376" width="2" height="2"/>
<rect x="1237" y="382" width="2" height="2"/>
<rect x="1053" y="387" width="2" height="2"/>
<rect x="1064" y="396" width="2" height="2"/>
<rect x="1048" y="403" width="2" height="2"/>
<rect x="1061" y="407" width="2" height="2"/>
<rect x="1023" y="419" width="2" height="2"/>
<rect x="1116" y="418" width="2" height="2"/>
<rect x="1113" y="424" width="2" height="2"/>
<rect x="1054" y="435" width="2" height="2"/>
<rect x="1117" y="467" width="2" height="2"/>
<rect x="1144" y="465" width="2" height="2"/>
<rect x="1062" y="490" width="2" height="2"/>
<rect x="1067" y="494" width="2" height="2"/>
<rect x="1066" y="503" width="2" height="2"/>
<rect x="1112" y="497" width="2" height="2"/>
<rect x="1238" y="484" width="2" height="2"/>
<rect x="1143" y="537" width="2" height="2"/>
<rect x="1062" y="541" width="2" height="2"/>
<rect x="1239" y="544" width="2" height="2"/>
<rect x="1118" y="551" width="2" height="2"/>
<rect x="1069" y="558" width="2" height="2"/>
<rect x="1070" y="578" width="2" height="2"/>
<rect x="1063" y="589" width="2" height="2"/>
<rect x="1118" y="595" width="2" height="2"/>
<rect x="1071" y="606" width="2" height="2"/>
<rect x="1240" y="598" width="2" height="2"/>
<rect x="1071" y="622" width="2" height="2"/>
<rect x="1072" y="636" width="2" height="2"/>
<rect x="1119" y="638" width="2" height="2"/>
<rect x="1240" y="637" width="2" height="2"/>
<rect x="1071" y="622" width="2" height="2"/>
<rect x="1072" y="636" width="2" height="2"/>
<rect x="1073" y="675" width="2" height="2"/>
<rect x="1119" y="638" width="2" height="2"/>
<rect x="1120" y="667" width="2" height="2"/>
<rect x="1240" y="637" width="2" height="2"/>
<rect x="1241" y="667" width="2" height="2"/>
<rect x="1006" y="672" width="2" height="2"/>
<rect x="1011" y="679" width="2" height="2"/>
<rect x="1016" y="685" width="2" height="2"/>
<rect x="1017" y="692" width="2" height="2"/>
<rect x="1018" y="696" width="2" height="2"/>
<rect x="1020" y="701" width="2" height="2"/>
<rect x="1021" y="709" width="2" height="2"/>
<rect x="1073" y="675" width="2" height="2"/>
<rect x="1074" y="689" width="2" height="2"/>
<rect x="1121" y="690" width="2" height="2"/>
<rect x="1122" y="708" width="2" height="2"/>
<rect x="1123" y="722" width="2" height="2"/>
<rect x="1123" y="732" width="2" height="2"/>
<rect x="1242" y="690" width="2" height="2"/>
<rect x="1243" y="708" width="2" height="2"/>
<rect x="1244" y="722" width="2" height="2"/>
<rect x="1244" y="732" width="2" height="2"/>
<rect x="154" y="91" width="2" height="2"/>
<rect x="158" y="77" width="2" height="2"/>
<rect x="158" y="72" width="2" height="2"/>
<rect x="163" y="71" width="2" height="2"/>
<rect x="167" y="80" width="2" height="2"/>
<rect x="169" y="70" width="2" height="2"/>
<rect x="182" y="148" width="2" height="2"/>
<rect x="184" y="118" width="2" height="2"/>
<rect x="184" y="111" width="2" height="2"/>
<rect x="185" y="104" width="2" height="2"/>
<rect x="186" y="98" width="2" height="2"/>
<rect x="189" y="84" width="2" height="2"/>
<rect x="191" y="79" width="2" height="2"/>
<rect x="195" y="96" width="2" height="2"/>
<rect x="196" y="100" width="2" height="2"/>
<rect x="202" y="127" width="2" height="2"/>
<rect x="206" y="88" width="2" height="2"/>
<rect x="208" y="82" width="2" height="2"/>
<rect x="212" y="73" width="2" height="2"/>
<rect x="214" y="73" width="2" height="2"/>
<rect x="228" y="153" width="2" height="2"/>
<rect x="231" y="106" width="2" height="2"/>
<rect x="233" y="98" width="2" height="2"/>
<rect x="236" y="95" width="2" height="2"/>
<rect x="238" y="101" width="2" height="2"/>
<rect x="239" y="101" width="2" height="2"/>
<rect x="241" y="94" width="2" height="2"/>
<rect x="242" y="88" width="2" height="2"/>
<rect x="245" y="98" width="2" height="2"/>
<rect x="246" y="104" width="2" height="2"/>
<rect x="247" y="111" width="2" height="2"/>
<rect x="249" y="116" width="2" height="2"/>
<rect x="251" y="120" width="2" height="2"/>
<rect x="266" y="167" width="2" height="2"/>
<rect x="267" y="170" width="2" height="2"/>
<rect x="268" y="173" width="2" height="2"/>
<rect x="268" y="173" width="2" height="2"/>
<rect x="268" y="176" width="2" height="2"/>
<rect x="269" y="179" width="2" height="2"/>
<rect x="269" y="179" width="2" height="2"/>
<rect x="270" y="182" width="2" height="2"/>
<rect x="272" y="185" width="2" height="2"/>
<rect x="278" y="164" width="2" height="2"/>
<rect x="279" y="161" width="2" height="2"/>
<rect x="279" y="158" width="2" height="2"/>
<rect x="280" y="155" width="2" height="2"/>
<rect x="280" y="155" width="2" height="2"/>
<rect x="281" y="159" width="2" height="2"/>
<rect x="283" y="163" width="2" height="2"/>
<rect x="306" y="129" width="2" height="2"/>
<rect x="308" y="123" width="2" height="2"/>
<rect x="348" y="121" width="2" height="2"/>
<rect x="350" y="116" width="2" height="2"/>
<rect x="371" y="112" width="2" height="2"/>
<rect x="374" y="118" width="2" height="2"/>
<rect x="512" y="110" width="2" height="2"/>
<rect x="513" y="107" width="2" height="2"/>
<rect x="514" y="103" width="2" height="2"/>
<rect x="587" y="105" width="2" height="2"/>
<rect x="588" y="102" width="2" height="2"/>
<rect x="589" y="99" width="2" height="2"/>
<rect x="591" y="96" width="2" height="2"/>
<rect x="592" y="93" width="2" height="2"/>
<rect x="1151" y="154" width="2" height="2"/>
<rect x="1151" y="151" width="2" height="2"/>
<rect x="1152" y="148" width="2" height="2"/>
<rect x="1152" y="145" width="2" height="2"/>
<rect x="1153" y="142" width="2" height="2"/>
<rect x="1153" y="139" width="2" height="2"/>
<rect x="1154" y="136" width="2" height="2"/>
<rect x="1154" y="133" width="2" height="2"/>
<rect x="1180" y="116" width="2" height="2"/>
<rect x="1181" y="113" width="2" height="2"/>
<rect x="1182" y="109" width="2" height="2"/>
<rect x="1182" y="106" width="2" height="2"/>
<rect x="1183" y="103" width="2" height="2"/>
<rect x="1184" y="100" width="2" height="2"/>
<rect x="1185" y="96" width="2" height="2"/>
<rect x="1186" y="93" width="2" height="2"/>
<rect x="1186" y="90" width="2" height="2"/>
<rect x="1186" y="90" width="2" height="2"/>
<rect x="1187" y="87" width="2" height="2"/>
<rect x="1188" y="84" width="2" height="2"/>
<rect x="1189" y="80" width="2" height="2"/>
<rect x="1190" y="77" width="2" height="2"/>
<rect x="1000" y="620" width="2" height="2"/>
<rect x="1001" y="623" width="2" height="2"/>
<rect x="1001" y="626" width="2" height="2"/>
<rect x="1001" y="629" width="2" height="2"/>
<rect x="1001" y="632" width="2" height="2"/>
<rect x="1001" y="635" width="2" height="2"/>
<rect x="1002" y="638" width="2" height="2"/>
<rect x="1002" y="641" width="2" height="2"/>
<rect x="1002" y="644" width="2" height="2"/>
<rect x="1002" y="647" width="2" height="2"/>
<rect x="1002" y="647" width="2" height="2"/>
<rect x="1003" y="650" width="2" height="2"/>
<rect x="1003" y="653" width="2" height="2"/>
<rect x="1003" y="656" width="2" height="2"/>
<rect x="1004" y="659" width="2" height="2"/>
<rect x="1004" y="662" width="2" height="2"/>
<rect x="1005" y="665" width="2" height="2"/>
<rect x="1005" y="668" width="2" height="2"/>
<rect x="1005" y="671" width="2" height="2"/>
<rect x="1006" y="674" width="2" height="2"/>
<rect x="1015" y="684" width="2" height="2"/>
<rect x="1016" y="687" width="2" height="2"/>
<rect x="1016" y="691" width="2" height="2"/>
<rect x="1017" y="694" width="2" height="2"/>
<rect x="1018" y="698" width="2" height="2"/>
<rect x="1018" y="698" width="2" height="2"/>
<rect x="1019" y="701" width="2" height="2"/>
<rect x="1020" y="705" width="2" height="2"/>
<rect x="1021" y="709" width="2" height="2"/>
<rect x="1074" y="689" width="2" height="2"/>
<rect x="1074" y="692" width="2" height="2"/>
<rect x="1075" y="695" width="2" height="2"/>
<rect x="1081" y="696" width="2" height="2"/>
<rect x="1082" y="699" width="2" height="2"/>
<rect x="1084" y="702" width="2" height="2"/>
<rect x="1084" y="702" width="2" height="2"/>
<rect x="1085" y="706" width="2" height="2"/>
<rect x="1086" y="709" width="2" height="2"/>
<rect x="1124" y="740" width="2" height="2"/>
<rect x="1125" y="744" width="2" height="2"/>
<rect x="1126" y="747" width="2" height="2"/>
<rect x="1126" y="747" width="2" height="2"/>
<rect x="1126" y="751" width="2" height="2"/>
<rect x="1126" y="755" width="2" height="2"/>
<rect x="1126" y="755" width="2" height="2"/>
<rect x="1128" y="759" width="2" height="2"/>
<rect x="1246" y="742" width="2" height="2"/>
<rect x="1247" y="745" width="2" height="2"/>
<rect x="1248" y="748" width="2" height="2"/>
<rect x="1249" y="751" width="2" height="2"/>
<rect x="891" y="385" width="2" height="2"/>
<rect x="979" y="374" width="2" height="2"/>
<rect x="957" y="471" width="2" height="2"/>
<rect x="973" y="429" width="2" height="2"/>
<rect x="936" y="450" width="2" height="2"/>
<rect x="890" y="459" width="2" height="2"/>
<rect x="704" y="497" width="2" height="2"/>
<rect x="897" y="411" width="2" height="2"/>
<rect x="775" y="421" width="2" height="2"/>
<rect x="770" y="417" width="2" height="2"/>
<rect x="933" y="392" width="2" height="2"/>
<rect x="972" y="422" width="2" height="2"/>
<rect x="938" y="443" width="2" height="2"/>
<rect x="883" y="474" width="2" height="2"/>
<rect x="935" y="365" width="2" height="2"/>
<rect x="937" y="334" width="2" height="2"/>
<rect x="952" y="423" width="2" height="2"/>
<rect x="859" y="459" width="2" height="2"/>
<rect x="923" y="331" width="2" height="2"/>
<rect x="867" y="434" width="2" height="2"/>
<rect x="779" y="406" width="2" height="2"/>
<rect x="848" y="425" width="2" height="2"/>
<rect x="717" y="383" width="2" height="2"/>
<rect x="847" y="408" width="2" height="2"/>
<rect x="849" y="331" width="2" height="2"/>
<rect x="701" y="385" width="2" height="2"/>
<rect x="953" y="356" width="2" height="2"/>
<rect x="900" y="414" width="2" height="2"/>
<rect x="953" y="376" width="2" height="2"/>
<rect x="989" y="432" width="2" height="2"/>
<rect x="722" y="369" width="2" height="2"/>
<rect x="708" y="363" width="2" height="2"/>
<rect x="883" y="368" width="2" height="2"/>
<rect x="799" y="324" width="2" height="2"/>
<rect x="995" y="360" width="2" height="2"/>
<rect x="970" y="401" width="2" height="2"/>
<rect x="709" y="393" width="2" height="2"/>
<rect x="801" y="352" width="2" height="2"/>
<rect x="959" y="375" width="2" height="2"/>
<rect x="858" y="436" width="2" height="2"/>
<rect x="932" y="414" width="2" height="2"/>
<rect x="827" y="443" width="2" height="2"/>
<rect x="866" y="419" width="2" height="2"/>
<rect x="949" y="376" width="2" height="2"/>
<rect x="821" y="374" width="2" height="2"/>
<rect x="852" y="403" width="2" height="2"/>
<rect x="993" y="366" width="2" height="2"/>
<rect x="799" y="348" width="2" height="2"/>
<rect x="795" y="389" width="2" height="2"/>
<rect x="891" y="452" width="2" height="2"/>
<rect x="936" y="463" width="2" height="2"/>
<rect x="966" y="419" width="2" height="2"/>
<rect x="864" y="435" width="2" height="2"/>
<rect x="701" y="414" width="2" height="2"/>
<rect x="756" y="450" width="2" height="2"/>
<rect x="898" y="379" width="2" height="2"/>
<rect x="937" y="448" width="2" height="2"/>
<rect x="885" y="376" width="2" height="2"/>
<rect x="888" y="387" width="2" height="2"/>
<rect x="905" y="356" width="2" height="2"/>
<rect x="763" y="383" width="2" height="2"/>
<rect x="929" y="368" width="2" height="2"/>
<rect x="730" y="408" width="2" height="2"/>
<rect x="933" y="413" width="2" height="2"/>
<rect x="975" y="384" width="2" height="2"/>
<rect x="947" y="374" width="2" height="2"/>
<rect x="937" y="377" width="2" height="2"/>
<rect x="790" y="393" width="2" height="2"/>
<rect x="826" y="387" width="2" height="2"/>
<rect x="893" y="441" width="2" height="2"/>
<rect x="981" y="450" width="2" height="2"/>
<rect x="711" y="421" width="2" height="2"/>
<rect x="735" y="422" width="2" height="2"/>
<rect x="976" y="358" width="2" height="2"/>
<rect x="834" y="441" width="2" height="2"/>
<rect x="878" y="407" width="2" height="2"/>
<rect x="982" y="447" width="2" height="2"/>
<rect x="824" y="399" width="2" height="2"/>
<rect x="730" y="388" width="2" height="2"/>
<rect x="745" y="383" width="2" height="2"/>
<rect x="704" y="462" width="2" height="2"/>
<rect x="736" y="406" width="2" height="2"/>
<rect x="991" y="469" width="2" height="2"/>
<rect x="738" y="444" width="2" height="2"/>
<rect x="704" y="399" width="2" height="2"/>
<rect x="921" y="376" width="2" height="2"/>
<rect x="756" y="466" width="2" height="2"/>
<rect x="914" y="424" width="2" height="2"/>
<rect x="957" y="402" width="2" height="2"/>
<rect x="889" y="388" width="2" height="2"/>
<rect x="776" y="426" width="2" height="2"/>
<rect x="990" y="403" width="2" height="2"/>
<rect x="703" y="398" width="2" height="2"/>
<rect x="896" y="410" width="2" height="2"/>
<rect x="793" y="390" width="2" height="2"/>
<rect x="919" y="442" width="2" height="2"/>
<rect x="846" y="469" width="2" height="2"/>
<rect x="717" y="371" width="2" height="2"/>
<rect x="831" y="441" width="2" height="2"/>
<rect x="903" y="446" width="2" height="2"/>
<rect x="809" y="458" width="2" height="2"/>
<rect x="894" y="377" width="2" height="2"/>
<rect x="815" y="375" width="2" height="2"/>
<rect x="936" y="467" width="2" height="2"/>
<rect x="870" y="381" width="2" height="2"/>
<rect x="787" y="499" width="2" height="2"/>
<rect x="911" y="442" width="2" height="2"/>
<rect x="949" y="378" width="2" height="2"/>
<rect x="994" y="449" width="2" height="2"/>
<rect x="950" y="378" width="2" height="2"/>
<rect x="828" y="385" width="2" height="2"/>
<rect x="967" y="363" width="2" height="2"/>
<rect x="881" y="444" width="2" height="2"/>
<rect x="970" y="415" width="2" height="2"/>
<rect x="700" y="375" width="2" height="2"/>
<rect x="778" y="359" width="2" height="2"/>
<rect x="945" y="428" width="2" height="2"/>
<rect x="967" y="473" width="2" height="2"/>
<rect x="944" y="423" width="2" height="2"/>
<rect x="961" y="377" width="2" height="2"/>
<rect x="956" y="391" width="2" height="2"/>
<rect x="943" y="370" width="2" height="2"/>
<rect x="804" y="327" width="2" height="2"/>
<rect x="725" y="340" width="2" height="2"/>
<rect x="760" y="382" width="2" height="2"/>
<rect x="926" y="429" width="2" height="2"/>
<rect x="882" y="392" width="2" height="2"/>
<rect x="904" y="379" width="2" height="2"/>
<rect x="776" y="410" width="2" height="2"/>
<rect x="926" y="415" width="2" height="2"/>
<rect x="725" y="363" width="2" height="2"/>
<rect x="943" y="408" width="2" height="2"/>
<rect x="874" y="377" width="2" height="2"/>
<rect x="970" y="439" width="2" height="2"/>
<rect x="843" y="373" width="2" height="2"/>
<rect x="877" y="413" width="2" height="2"/>
<rect x="754" y="427" width="2" height="2"/>
<rect x="911" y="372" width="2" height="2"/>
<rect x="821" y="441" width="2" height="2"/>
<rect x="855" y="411" width="2" height="2"/>
<rect x="1000" y="413" width="2" height="2"/>
<rect x="812" y="446" width="2" height="2"/>
<rect x="937" y="437" width="2" height="2"/>
<rect x="746" y="375" width="2" height="2"/>
<rect x="856" y="384" width="2" height="2"/>
<rect x="705" y="517" width="2" height="2"/>
<rect x="961" y="428" width="2" height="2"/>
<rect x="846" y="377" width="2" height="2"/>
<rect x="934" y="392" width="2" height="2"/>
<rect x="828" y="465" width="2" height="2"/>
<rect x="946" y="383" width="2" height="2"/>
<rect x="990" y="404" width="2" height="2"/>
<rect x="760" y="415" width="2" height="2"/>
<rect x="754" y="415" width="2" height="2"/>
<rect x="867" y="410" width="2" height="2"/>
<rect x="974" y="428" width="2" height="2"/>
<rect x="718" y="373" width="2" height="2"/>
<rect x="735" y="382" width="2" height="2"/>
<rect x="989" y="402" width="2" height="2"/>
<rect x="892" y="453" width="2" height="2"/>
<rect x="988" y="386" width="2" height="2"/>
<rect x="834" y="371" width="2" height="2"/>
<rect x="747" y="519" width="2" height="2"/>
<rect x="766" y="379" width="2" height="2"/>
<rect x="711" y="403" width="2" height="2"/>
<rect x="972" y="439" width="2" height="2"/>
<rect x="972" y="410" width="2" height="2"/>
<rect x="936" y="394" width="2" height="2"/>
<rect x="913" y="337" width="2" height="2"/>
<rect x="743" y="407" width="2" height="2"/>
<rect x="789" y="350" width="2" height="2"/>
<rect x="731" y="369" width="2" height="2"/>
<rect x="797" y="403" width="2" height="2"/>
<rect x="844" y="424" width="2" height="2"/>
<rect x="750" y="406" width="2" height="2"/>
<rect x="904" y="425" width="2" height="2"/>
<rect x="703" y="399" width="2" height="2"/>
<rect x="710" y="379" width="2" height="2"/>
<rect x="979" y="420" width="2" height="2"/>
<rect x="961" y="491" width="2" height="2"/>
<rect x="967" y="430" width="2" height="2"/>
<rect x="728" y="436" width="2" height="2"/>
<rect x="979" y="433" width="2" height="2"/>
<rect x="836" y="359" width="2" height="2"/>
<rect x="802" y="423" width="2" height="2"/>
<rect x="889" y="365" width="2" height="2"/>
<rect x="742" y="406" width="2" height="2"/>
<rect x="915" y="417" width="2" height="2"/>
<rect x="866" y="451" width="2" height="2"/>
<rect x="779" y="465" width="2" height="2"/>
<rect x="823" y="421" width="2" height="2"/>
<rect x="953" y="429" width="2" height="2"/>
<rect x="800" y="426" width="2" height="2"/>
<rect x="795" y="442" width="2" height="2"/>
<rect x="972" y="483" width="2" height="2"/>
<rect x="716" y="473" width="2" height="2"/>
<rect x="969" y="391" width="2" height="2"/>
<rect x="843" y="381" width="2" height="2"/>
<rect x="785" y="403" width="2" height="2"/>
<rect x="809" y="429" width="2" height="2"/>
<rect x="998" y="491" width="2" height="2"/>
<rect x="728" y="403" width="2" height="2"/>
<rect x="786" y="414" width="2" height="2"/>
<rect x="918" y="396" width="2" height="2"/>
<rect x="788" y="411" width="2" height="2"/>
<rect x="943" y="403" width="2" height="2"/>
<rect x="802" y="406" width="2" height="2"/>
<rect x="950" y="406" width="2" height="2"/>
<rect x="858" y="420" width="2" height="2"/>
<rect x="974" y="441" width="2" height="2"/>
<rect x="765" y="385" width="2" height="2"/>
<rect x="753" y="395" width="2" height="2"/>
<rect x="932" y="398" width="2" height="2"/>
<rect x="723" y="380" width="2" height="2"/>
<rect x="725" y="369" width="2" height="2"/>
<rect x="782" y="376" width="2" height="2"/>
<rect x="761" y="359" width="2" height="2"/>
<rect x="944" y="365" width="2" height="2"/>
<rect x="875" y="408" width="2" height="2"/>
<rect x="920" y="417" width="2" height="2"/>
<rect x="822" y="402" width="2" height="2"/>
<rect x="944" y="391" width="2" height="2"/>
<rect x="800" y="445" width="2" height="2"/>
<rect x="848" y="340" width="2" height="2"/>
<rect x="704" y="441" width="2" height="2"/>
<rect x="962" y="381" width="2" height="2"/>
<rect x="779" y="432" width="2" height="2"/>
<rect x="810" y="470" width="2" height="2"/>
<rect x="748" y="369" width="2" height="2"/>
<rect x="700" y="441" width="2" height="2"/>
<rect x="856" y="361" width="2" height="2"/>
<rect x="735" y="419" width="2" height="2"/>
<rect x="915" y="435" width="2" height="2"/>
<rect x="796" y="334" width="2" height="2"/>
<rect x="914" y="357" width="2" height="2"/>
<rect x="717" y="447" width="2" height="2"/>
<rect x="963" y="447" width="2" height="2"/>
<rect x="854" y="391" width="2" height="2"/>
<rect x="859" y="396" width="2" height="2"/>
<rect x="991" y="402" width="2" height="2"/>
<rect x="767" y="411" width="2" height="2"/>
<rect x="775" y="420" width="2" height="2"/>
<rect x="946" y="421" width="2" height="2"/>
<rect x="910" y="407" width="2" height="2"/>
<rect x="758" y="455" width="2" height="2"/>
<rect x="873" y="410" width="2" height="2"/>
<rect x="857" y="399" width="2" height="2"/>
<rect x="962" y="387" width="2" height="2"/>
<rect x="916" y="423" width="2" height="2"/>
<rect x="848" y="409" width="2" height="2"/>
<rect x="850" y="400" width="2" height="2"/>
<rect x="822" y="423" width="2" height="2"/>
<rect x="740" y="341" width="2" height="2"/>
<rect x="743" y="363" width="2" height="2"/>
<rect x="872" y="404" width="2" height="2"/>
<rect x="948" y="381" width="2" height="2"/>
<rect x="982" y="374" width="2" height="2"/>
<rect x="953" y="430" width="2" height="2"/>
<rect x="858" y="332" width="2" height="2"/>
<rect x="934" y="459" width="2" height="2"/>
<rect x="801" y="406" width="2" height="2"/>
<rect x="831" y="438" width="2" height="2"/>
<rect x="995" y="432" width="2" height="2"/>
<rect x="945" y="325" width="2" height="2"/>
<rect x="955" y="447" width="2" height="2"/>
<rect x="988" y="419" width="2" height="2"/>
<rect x="981" y="404" width="2" height="2"/>
<rect x="890" y="444" width="2" height="2"/>
<rect x="809" y="390" width="2" height="2"/>
<rect x="830" y="401" width="2" height="2"/>
<rect x="851" y="425" width="2" height="2"/>
<rect x="992" y="407" width="2" height="2"/>
<rect x="934" y="454" width="2" height="2"/>
<rect x="943" y="383" width="2" height="2"/>
<rect x="966" y="412" width="2" height="2"/>
<rect x="893" y="397" width="2" height="2"/>
<rect x="779" y="391" width="2" height="2"/>
<rect x="863" y="377" width="2" height="2"/>
<rect x="978" y="383" width="2" height="2"/>
<rect x="856" y="384" width="2" height="2"/>
<rect x="830" y="434" width="2" height="2"/>
<rect x="791" y="394" width="2" height="2"/>
<rect x="895" y="441" width="2" height="2"/>
<rect x="988" y="439" width="2" height="2"/>
<rect x="854" y="399" width="2" height="2"/>
<rect x="860" y="446" width="2" height="2"/>
<rect x="744" y="418" width="2" height="2"/>
<rect x="788" y="418" width="2" height="2"/>
<rect x="822" y="397" width="2" height="2"/>
<rect x="726" y="432" width="2" height="2"/>
<rect x="864" y="432" width="2" height="2"/>
<rect x="871" y="360" width="2" height="2"/>
<rect x="895" y="422" width="2" height="2"/>
<rect x="838" y="461" width="2" height="2"/>
<rect x="865" y="372" width="2" height="2"/>
<rect x="793" y="376" width="2" height="2"/>
<rect x="772" y="412" width="2" height="2"/>
<rect x="815" y="449" width="2" height="2"/>
<rect x="876" y="439" width="2" height="2"/>
<rect x="959" y="407" width="2" height="2"/>
<rect x="771" y="363" width="2" height="2"/>
<rect x="785" y="389" width="2" height="2"/>
<rect x="997" y="386" width="2" height="2"/>
<rect x="747" y="467" width="2" height="2"/>
<rect x="719" y="432" width="2" height="2"/>
<rect x="718" y="374" width="2" height="2"/>
<rect x="816" y="346" width="2" height="2"/>
<rect x="732" y="427" width="2" height="2"/>
<rect x="767" y="464" width="2" height="2"/>
<rect x="746" y="388" width="2" height="2"/>
<rect x="801" y="370" width="2" height="2"/>
<rect x="885" y="450" width="2" height="2"/>
<rect x="956" y="424" width="2" height="2"/>
<rect x="922" y="363" width="2" height="2"/>
<rect x="923" y="407" width="2" height="2"/>
<rect x="936" y="361" width="2" height="2"/>
<rect x="913" y="421" width="2" height="2"/>
<rect x="962" y="394" width="2" height="2"/>
<rect x="700" y="409" width="2" height="2"/>
<rect x="849" y="354" width="2" height="2"/>
<rect x="990" y="368" width="2" height="2"/>
<rect x="936" y="387" width="2" height="2"/>
<rect x="963" y="375" width="2" height="2"/>
<rect x="836" y="381" width="2" height="2"/>
<rect x="837" y="399" width="2" height="2"/>
<rect x="817" y="373" width="2" height="2"/>
<rect x="867" y="379" width="2" height="2"/>
<rect x="937" y="426" width="2" height="2"/>
<rect x="956" y="363" width="2" height="2"/>
<rect x="755" y="404" width="2" height="2"/>
<rect x="791" y="434" width="2" height="2"/>
<rect x="875" y="443" width="2" height="2"/>
<rect x="726" y="433" width="2" height="2"/>
<rect x="954" y="388" width="2" height="2"/>
<rect x="952" y="429" width="2" height="2"/>
<rect x="828" y="397" width="2" height="2"/>
<rect x="974" y="416" width="2" height="2"/>
<rect x="870" y="405" width="2" height="2"/>
<rect x="849" y="461" width="2" height="2"/>
<rect x="862" y="373" width="2" height="2"/>
<rect x="1000" y="358" width="2" height="2"/>
<rect x="906" y="399" width="2" height="2"/>
<rect x="817" y="372" width="2" height="2"/>
<rect x="805" y="444" width="2" height="2"/>
<rect x="985" y="383" width="2" height="2"/>
<rect x="729" y="362" width="2" height="2"/>
<rect x="812" y="364" width="2" height="2"/>
<rect x="872" y="432" width="2" height="2"/>
<rect x="965" y="447" width="2" height="2"/>
<rect x="832" y="394" width="2" height="2"/>
<rect x="888" y="439" width="2" height="2"/>
<rect x="859" y="403" width="2" height="2"/>
<rect x="945" y="420" width="2" height="2"/>
<rect x="994" y="433" width="2" height="2"/>
<rect x="948" y="386" width="2" height="2"/>
<rect x="969" y="403" width="2" height="2"/>
<rect x="907" y="454" width="2" height="2"/>
<rect x="826" y="421" width="2" height="2"/>
<rect x="854" y="430" width="2" height="2"/>
<rect x="851" y="413" width="2" height="2"/>
<rect x="889" y="426" width="2" height="2"/>
<rect x="881" y="331" width="2" height="2"/>
<rect x="891" y="500" width="2" height="2"/>
<rect x="712" y="347" width="2" height="2"/>
<rect x="792" y="439" width="2" height="2"/>
<rect x="908" y="436" width="2" height="2"/>
<rect x="953" y="405" width="2" height="2"/>
<rect x="876" y="392" width="2" height="2"/>
<rect x="849" y="382" width="2" height="2"/>
<rect x="866" y="398" width="2" height="2"/>
<rect x="860" y="459" width="2" height="2"/>
<rect x="1000" y="369" width="2" height="2"/>
<rect x="736" y="386" width="2" height="2"/>
<rect x="746" y="405" width="2" height="2"/>
<rect x="729" y="386" width="2" height="2"/>
<rect x="751" y="334" width="2" height="2"/>
<rect x="884" y="394" width="2" height="2"/>
<rect x="943" y="410" width="2" height="2"/>
<rect x="932" y="406" width="2" height="2"/>
<rect x="796" y="396" width="2" height="2"/>
<rect x="750" y="369" width="2" height="2"/>
<rect x="780" y="471" width="2" height="2"/>
<rect x="875" y="452" width="2" height="2"/>
<rect x="804" y="368" width="2" height="2"/>
<rect x="716" y="416" width="2" height="2"/>
<rect x="832" y="356" width="2" height="2"/>
<rect x="886" y="404" width="2" height="2"/>
<rect x="980" y="415" width="2" height="2"/>
<rect x="957" y="372" width="2" height="2"/>
<rect x="945" y="479" width="2" height="2"/>
<rect x="791" y="327" width="2" height="2"/>
<rect x="849" y="346" width="2" height="2"/>
<rect x="986" y="406" width="2" height="2"/>
<rect x="916" y="442" width="2" height="2"/>
<rect x="766" y="376" width="2" height="2"/>
<rect x="845" y="476" width="2" height="2"/>
<rect x="938" y="405" width="2" height="2"/>
<rect x="807" y="427" width="2" height="2"/>
<rect x="755" y="435" width="2" height="2"/>
<rect x="869" y="398" width="2" height="2"/>
<rect x="734" y="367" width="2" height="2"/>
<rect x="821" y="396" width="2" height="2"/>
<rect x="719" y="455" width="2" height="2"/>
<rect x="805" y="454" width="2" height="2"/>
<rect x="773" y="415" width="2" height="2"/>
<rect x="771" y="433" width="2" height="2"/>
<rect x="710" y="386" width="2" height="2"/>
<rect x="746" y="374" width="2" height="2"/>
<rect x="912" y="429" width="2" height="2"/>
<rect x="951" y="421" width="2" height="2"/>
<rect x="738" y="336" width="2" height="2"/>
<rect x="942" y="429" width="2" height="2"/>
<rect x="747" y="367" width="2" height="2"/>
<rect x="813" y="453" width="2" height="2"/>
<rect x="988" y="428" width="2" height="2"/>
<rect x="851" y="494" width="2" height="2"/>
<rect x="768" y="385" width="2" height="2"/>
<rect x="912" y="410" width="2" height="2"/>
<rect x="778" y="445" width="2" height="2"/>
<rect x="810" y="374" width="2" height="2"/>
<rect x="773" y="384" width="2" height="2"/>
<rect x="962" y="387" width="2" height="2"/>
<rect x="736" y="357" width="2" height="2"/>
<rect x="781" y="400" width="2" height="2"/>
<rect x="931" y="283" width="2" height="2"/>
<rect x="896" y="297" width="2" height="2"/>
<rect x="792" y="283" width="2" height="2"/>
<rect x="725" y="267" width="2" height="2"/>
<rect x="954" y="278" width="2" height="2"/>
<rect x="898" y="262" width="2" height="2"/>
<rect x="868" y="281" width="2" height="2"/>
<rect x="849" y="276" width="2" height="2"/>
<rect x="719" y="277" width="2" height="2"/>
<rect x="767" y="263" width="2" height="2"/>
</g>
<polyline fill="none" stroke="#00FF40" stroke-width="2" stroke-linejoin="round" shape-rendering="crispEdges" points="151.7,232.8 193.0,226.4 300.4,225.3 343.4,221.6 380.0,221.6 393.0,218.9 412.0,216.7 440.0,216.7 461.5,217.8 517.4,215.6 569.0,209.6 590.4,208.0 637.7,204.5 667.8,201.7 682.9,202.7 691.5,201.7 702.2,201.7 710.8,203.8 730.0,203.8 734.3,204.9 773.0,206.0 779.4,207.5 798.8,209.6 813.8,209.6 826.7,213.5 839.6,215.6 861.0,215.6 867.5,214.0 889.0,214.0 897.6,215.6 955.7,216.7 990.0,218.2 1022.0,217.8 1034.9,215.6 1054.2,210.3 1071.4,209.2 1077.9,211.3 1097.2,211.3 1125.2,206.6 1148.8,204.5 1161.7,201.0 1185.3,199.5 1221.9,197.0 1269.2,196.3 1320.7,195.9"/>
<polyline fill="none" stroke="#804000" stroke-width="2" stroke-linejoin="round" shape-rendering="crispEdges" points="151.7,170.0 166.0,170.0 170.0,166.0 172.6,169.4 190.8,169.4 192.0,166.8 196.0,169.0 200.0,170.0 202.6,166.0 207.0,164.0 211.0,163.0 212.0,165.8 216.6,164.0 222.0,163.0 252.0,163.0 255.0,158.7 261.8,155.9 284.0,156.0 287.5,152.0 293.0,148.6 304.7,148.6 311.6,136.0 317.6,140.4 322.0,147.0 328.0,148.6 337.0,148.6 341.0,143.0 346.6,142.0 353.7,142.0 359.5,135.7 369.0,134.0 409.0,134.0 416.5,128.0 440.0,127.0 450.7,127.0 456.8,134.0 463.6,128.0 469.0,127.0 515.2,127.0 519.5,122.0 526.0,120.0 572.0,120.0 575.4,115.7 580.8,112.5 606.6,112.5 612.0,106.5 617.3,111.4 622.7,113.0 634.5,113.0 641.0,106.5 647.4,105.6 653.8,99.0 661.4,98.5 665.7,104.0 669.0,114.6 676.4,151.0 685.0,209.2 689.3,224.0 693.6,229.6 698.0,248.0 700.0,253.0 707.6,280.8 713.0,308.8 718.3,325.0 721.5,327.0 724.8,320.6 729.0,335.6 737.5,335.6 744.0,347.5 750.4,362.5 752.6,377.5 758.0,396.9 762.2,401.2 768.7,405.5 770.8,377.5 775.1,357.1 778.4,357.1 781.6,371.1 787.0,377.5 791.3,390.4 803.0,400.1 809.5,386.1 812.7,396.9 818.1,414.0 824.6,420.5 831.0,415.2 837.5,419.4 841.8,416.2 847.1,422.7 859.0,429.1 869.7,425.9 874.0,419.4 880.4,428.0 889.0,432.3 900.9,423.8 906.2,424.8 913.8,435.6 921.3,424.8 932.0,414.0 944.9,390.4 949.2,380.8 955.7,377.5 966.4,363.6 970.7,363.6 979.3,350.7 987.9,326.0 991.1,328.1 998.6,311.0 1009.4,286.2 1015.8,268.0 1028.4,246.8 1037.0,238.2 1045.6,235.0 1054.2,226.4 1059.6,222.5 1067.1,220.0 1075.7,213.5 1099.4,213.5 1103.7,208.1 1114.4,198.4 1125.2,186.6 1129.5,184.5 1138.0,184.5 1142.4,179.1 1149.9,177.0 1153.1,172.7 1161.7,170.5 1168.1,164.0 1177.8,162.3 1185.3,156.5 1190.7,144.7 1197.2,148.0 1201.5,154.4 1205.8,155.5 1215.4,155.5 1217.6,153.3 1224.0,151.2 1228.3,149.0 1239.0,148.6 1243.4,143.6 1249.8,142.1 1320.7,142.1"/>
<polyline fill="none" stroke="#008040" stroke-width="2" stroke-linejoin="round" shape-rendering="crispEdges" points="151.7,600.0 167.2,600.8 171.5,598.6 184.4,599.7 199.4,603.3 205.9,601.6 212.3,603.8 231.7,605.5 240.3,608.7 253.2,610.9 259.6,609.8 266.0,613.7 283.2,619.5 300.4,622.7 310.0,616.2 322.0,622.7 334.8,629.0 356.3,628.0 386.4,630.8 399.3,633.4 414.4,631.7 440.0,632.5 456.8,637.7 479.8,637.7 494.5,640.9 511.2,640.9 523.8,637.7 544.8,636.7 572.0,632.5 586.7,623.0 605.5,614.7 611.8,608.4 624.4,607.3 639.9,595.8 654.9,569.0 663.5,551.8 676.4,534.6 693.6,524.9 708.6,520.0 721.5,521.7 725.8,517.4 730.0,519.0 738.6,514.1 742.9,516.3 749.3,515.2 754.7,521.2 761.2,521.2 767.6,523.8 769.8,510.9 775.1,495.4 780.5,495.4 784.8,497.6 789.1,496.3 791.3,502.3 798.8,504.0 803.0,508.8 810.6,501.3 818.1,513.0 824.6,515.2 832.1,510.5 839.6,516.3 846.0,519.5 850.4,516.3 856.8,520.6 867.5,519.5 873.0,513.0 877.2,516.3 882.6,528.0 890.1,533.5 899.8,526.0 904.1,526.0 911.6,531.3 914.8,530.3 921.3,521.7 934.2,518.4 944.9,517.4 949.2,514.1 953.5,515.7 966.4,509.8 979.3,508.3 987.9,505.5 991.1,511.0 998.6,506.6 1009.4,507.7 1018.0,511.0 1022.0,514.1 1034.9,521.2 1047.8,527.0 1067.1,538.9 1073.6,539.3 1095.1,559.3 1116.6,567.9 1135.9,575.4 1159.5,580.8 1176.7,584.0 1187.5,581.8 1193.9,575.0 1204.7,581.4 1221.9,586.1 1239.0,590.0 1245.5,587.9 1269.2,593.0 1295.0,601.2 1320.7,607.6"/>
<polyline fill="none" stroke="#FF0000" stroke-width="2" stroke-linejoin="round" shape-rendering="crispEdges" points="151.7,580.8 165.0,580.8 167.2,586.8 175.8,580.8 188.7,580.8 190.8,586.0 195.0,584.6 200.5,589.4 205.4,585.0 213.4,589.4 233.8,589.4 237.0,595.2 242.4,592.0 246.7,597.0 252.0,598.6 257.5,606.0 262.8,607.6 267.0,614.0 274.7,617.3 279.0,624.4 304.7,625.3 309.0,614.0 313.3,617.3 324.0,629.0 330.5,634.5 352.0,634.5 356.3,629.0 362.8,634.5 395.0,634.5 399.3,638.8 412.2,634.5 442.3,634.5 444.0,634.6 451.5,643.0 460.0,639.8 465.0,643.0 471.4,643.0 476.7,636.7 482.0,642.0 487.0,643.0 509.0,643.0 512.3,637.7 519.6,635.2 531.0,634.6 537.4,627.2 542.7,626.2 558.4,625.6 562.6,620.0 572.0,618.4 582.5,617.8 586.7,610.5 593.0,608.4 596.9,604.4 609.8,590.4 625.9,589.4 631.3,583.0 638.8,578.6 648.5,537.8 653.8,527.7 659.2,503.4 663.5,468.0 667.8,440.0 671.0,390.4 673.2,364.6 676.4,349.6 679.6,360.4 682.9,381.8 686.0,369.0 689.3,334.6 694.7,288.4 696.8,274.4 701.0,260.4 706.5,259.3 709.7,253.0 714.0,263.6 717.2,262.6 721.0,267.5 724.8,251.8 729.0,244.3 734.3,228.5 736.4,231.8 739.7,226.4 742.9,217.8 746.0,216.7 749.3,198.4 752.6,188.8 755.8,191.0 758.0,200.6 762.2,204.9 764.4,211.3 768.7,211.3 771.3,224.2 775.0,196.3 777.3,194.1 782.6,194.1 787.0,181.2 790.2,177.0 792.3,196.3 793.4,226.4 795.5,272.2 798.8,308.8 802.0,332.4 805.2,360.4 808.4,364.6 816.0,367.9 820.3,374.3 824.6,376.5 825.6,372.2 831.0,377.5 841.8,388.3 847.1,381.8 853.6,377.5 860.0,377.5 864.3,381.8 870.8,384.0 878.3,396.9 882.6,402.3 890.1,402.3 898.7,393.7 908.4,395.2 912.7,398.0 921.3,395.8 932.0,393.7 942.8,395.8 949.2,409.8 954.6,406.6 961.0,404.4 966.4,409.8 977.2,418.4 986.8,440.0 992.2,435.6 999.7,438.8 1000.8,440.0 1007.2,461.5 1011.5,468.0 1015.8,477.6 1022.3,487.3 1030.6,495.9 1034.9,496.3 1040.3,493.7 1049.9,499.7 1055.3,508.8 1066.1,509.8 1068.2,515.2 1074.7,519.5 1080.0,528.1 1085.4,535.6 1090.8,537.8 1099.4,552.8 1103.7,555.0 1118.7,555.0 1126.2,562.5 1133.8,571.1 1140.2,572.8 1159.5,572.8 1163.8,579.7 1170.3,581.8 1172.4,585.0 1181.0,578.6 1187.5,573.2 1190.7,566.8 1198.2,575.4 1204.7,580.1 1211.1,581.8 1216.5,589.4 1228.3,589.4 1234.8,596.9 1239.0,598.0 1246.6,590.4 1252.0,596.9 1257.3,598.0 1263.8,591.5 1273.5,605.5 1301.4,607.6 1305.7,613.7 1314.3,616.7 1320.7,616.7"/>
<polyline fill="none" stroke="#FF8000" stroke-width="1" shape-rendering="crispEdges" points="149.2,558.8 158.2,560.3 169.0,558.8 181.9,558.8 187.3,562.0 198.0,563.5 209.8,564.6 216.3,566.7 229.2,566.7 237.8,570.6 246.4,572.0 257.1,575.3 267.9,579.6 278.5,582.8 282.9,586.0 297.9,590.4 302.2,590.4 313.0,587.8 319.5,590.4 330.2,595.7 345.2,599.6 362.5,601.0 392.5,605.4 399.0,607.0 435.5,607.0 441.9,609.7 448.2,611.2 465.5,612.5 476.2,614.0 493.4,616.8 512.7,616.8 540.7,614.0 568.5,610.4 587.9,601.1 607.3,591.4 622.3,586.7 636.3,579.6 650.3,560.3 661.0,539.9 667.5,522.7 673.9,499.0 684.7,471.0 699.7,441.0 705.1,430.0 710.5,415.0 715.8,408.6 725.5,401.0 727.5,399.0 736.1,392.5 746.8,378.5 759.7,358.8 769.4,362.4 774.8,359.2 783.4,349.5 794.1,343.7 804.9,348.9 817.8,341.0 830.7,339.9 841.4,343.0 871.5,338.8 877.9,344.2 888.7,351.7 901.5,348.5 916.5,344.2 925.2,346.3 951.0,369.5 959.6,372.1 972.5,377.5 985.4,391.4 996.1,400.0 1006.9,413.0 1023.8,441.0 1036.7,451.7 1049.6,462.5 1058.2,473.2 1068.9,479.3 1090.4,500.1 1109.8,514.1 1124.8,523.7 1137.7,530.2 1150.6,537.7 1174.2,546.3 1183.9,546.3 1194.7,542.0 1202.2,545.2 1234.4,557.0 1255.9,562.0 1277.4,566.7 1292.5,571.7 1318.2,577.5"/>
<polyline fill="none" stroke="#0000FF" stroke-width="2" stroke-linejoin="round" shape-rendering="crispEdges" points="151.7,557.8 160.7,559.3 171.5,557.8 184.4,557.8 189.8,561.0 200.5,562.5 212.3,563.6 218.8,565.7 231.7,565.7 240.3,569.6 248.9,571.0 259.6,574.3 270.4,578.6 281.0,581.8 285.4,585.0 300.4,589.4 304.7,589.4 315.5,586.8 322.0,589.4 332.7,594.7 347.7,598.6 365.0,600.0 395.0,604.4 401.5,606.0 438.0,606.0 444.4,608.7 450.7,610.2 468.0,611.5 478.7,613.0 495.9,615.8 515.2,615.8 543.2,613.0 571.0,609.4 590.4,600.1 609.8,590.4 624.8,585.7 638.8,578.6 652.8,559.3 663.5,538.9 670.0,521.7 676.4,498.0 687.2,470.0 702.2,440.0 707.6,429.0 713.0,414.0 718.3,407.6 728.0,400.0 730.0,398.0 738.6,391.5 749.3,377.5 762.2,357.8 771.9,361.4 777.3,358.2 785.9,348.5 796.6,342.7 807.4,347.9 820.3,340.0 833.2,338.9 843.9,342.0 874.0,337.8 880.4,343.2 891.2,350.7 904.0,347.5 919.0,343.2 927.7,345.3 953.5,368.5 962.1,371.1 975.0,376.5 987.9,390.4 998.6,399.0 1009.4,412.0 1026.3,440.0 1039.2,450.7 1052.1,461.5 1060.7,472.2 1071.4,478.3 1092.9,499.1 1112.3,513.1 1127.3,522.7 1140.2,529.2 1153.1,536.7 1176.7,545.3 1186.4,545.3 1197.2,541.0 1204.7,544.2 1236.9,556.0 1258.4,561.0 1279.9,565.7 1295.0,570.7 1320.7,576.5"/>
<g fill="#808080" shape-rendering="crispEdges">
<rect x="150" y="47" width="1172" height="2"/>
<rect x="150" y="47" width="2" height="722"/>
<rect x="1320" y="47" width="2" height="722"/>
<rect x="150" y="768" width="1172" height="1"/>
<rect x="40" y="48" width="1" height="721"/>
<rect x="77" y="48" width="1" height="721"/>
<rect x="114" y="48" width="1" height="721"/>
</g>
<g stroke="#808080" stroke-width="1" shape-rendering="crispEdges">
<line x1="36.5" y1="48.5" x2="40.5" y2="48.5"/>
<line x1="36.5" y1="128.5" x2="40.5" y2="128.5"/>
<line x1="36.5" y1="208.5" x2="40.5" y2="208.5"/>
<line x1="36.5" y1="288.5" x2="40.5" y2="288.5"/>
<line x1="36.5" y1="368.5" x2="40.5" y2="368.5"/>
<line x1="36.5" y1="448.5" x2="40.5" y2="448.5"/>
<line x1="36.5" y1="528.5" x2="40.5" y2="528.5"/>
<line x1="36.5" y1="608.5" x2="40.5" y2="608.5"/>
<line x1="36.5" y1="688.5" x2="40.5" y2="688.5"/>
<line x1="36.5" y1="768.5" x2="40.5" y2="768.5"/>
<line x1="40.5" y1="48.5" x2="44.5" y2="48.5"/>
<line x1="40.5" y1="768.5" x2="44.5" y2="768.5"/>
<line x1="73.5" y1="48.5" x2="77.5" y2="48.5"/>
<line x1="73.5" y1="108.5" x2="77.5" y2="108.5"/>
<line x1="73.5" y1="168.5" x2="77.5" y2="168.5"/>
<line x1="73.5" y1="228.5" x2="77.5" y2="228.5"/>
<line x1="73.5" y1="288.5" x2="77.5" y2="288.5"/>
<line x1="73.5" y1="348.5" x2="77.5" y2="348.5"/>
<line x1="73.5" y1="408.5" x2="77.5" y2="408.5"/>
<line x1="73.5" y1="468.5" x2="77.5" y2="468.5"/>
<line x1="73.5" y1="528.5" x2="77.5" y2="528.5"/>
<line x1="73.5" y1="588.5" x2="77.5" y2="588.5"/>
<line x1="73.5" y1="648.5" x2="77.5" y2="648.5"/>
<line x1="73.5" y1="708.5" x2="77.5" y2="708.5"/>
<line x1="73.5" y1="768.5" x2="77.5" y2="768.5"/>
<line x1="77.5" y1="48.5" x2="81.5" y2="48.5"/>
<line x1="77.5" y1="768.5" x2="81.5" y2="768.5"/>
<line x1="110.5" y1="48.5" x2="114.5" y2="48.5"/>
<line x1="110.5" y1="138.5" x2="114.5" y2="138.5"/>
<line x1="110.5" y1="228.5" x2="114.5" y2="228.5"/>
<line x1="110.5" y1="318.5" x2="114.5" y2="318.5"/>
<line x1="110.5" y1="408.5" x2="114.5" y2="408.5"/>
<line x1="110.5" y1="498.5" x2="114.5" y2="498.5"/>
<line x1="110.5" y1="588.5" x2="114.5" y2="588.5"/>
<line x1="110.5" y1="678.5" x2="114.5" y2="678.5"/>
<line x1="110.5" y1="768.5" x2="114.5" y2="768.5"/>
<line x1="114.5" y1="48.5" x2="118.5" y2="48.5"/>
<line x1="114.5" y1="768.5" x2="118.5" y2="768.5"/>
<line x1="147" y1="48.5" x2="150" y2="48.5"/>
<line x1="147" y1="228.5" x2="150" y2="228.5"/>
<line x1="147" y1="408.5" x2="150" y2="408.5"/>
<line x1="147" y1="588.5" x2="150" y2="588.5"/>
<line x1="147" y1="768.5" x2="150" y2="768.5"/>
<line x1="1322" y1="48.5" x2="1326" y2="48.5"/>
<line x1="1322" y1="120.5" x2="1326" y2="120.5"/>
<line x1="1322" y1="192.5" x2="1326" y2="192.5"/>
<line x1="1322" y1="264.5" x2="1326" y2="264.5"/>
<line x1="1322" y1="336.5" x2="1326" y2="336.5"/>
<line x1="1322" y1="408.5" x2="1326" y2="408.5"/>
<line x1="1322" y1="480.5" x2="1326" y2="480.5"/>
<line x1="1322" y1="552.5" x2="1326" y2="552.5"/>
<line x1="1322" y1="624.5" x2="1326" y2="624.5"/>
<line x1="1322" y1="696.5" x2="1326" y2="696.5"/>
<line x1="1322" y1="768.5" x2="1326" y2="768.5"/>
<line x1="1358.5" y1="48" x2="1358.5" y2="769"/>
<line x1="1358.5" y1="48.5" x2="1362.5" y2="48.5"/>
<line x1="1358.5" y1="228.5" x2="1362.5" y2="228.5"/>
<line x1="1358.5" y1="408.5" x2="1362.5" y2="408.5"/>
<line x1="1358.5" y1="588.5" x2="1362.5" y2="588.5"/>
<line x1="1358.5" y1="768.5" x2="1362.5" y2="768.5"/>
<line x1="1354.5" y1="48.5" x2="1358.5" y2="48.5"/>
<line x1="1354.5" y1="768.5" x2="1358.5" y2="768.5"/>
<line x1="1395.5" y1="48" x2="1395.5" y2="769"/>
<line x1="1395.5" y1="48.5" x2="1399.5" y2="48.5"/>
<line x1="1395.5" y1="108.5" x2="1399.5" y2="108.5"/>
<line x1="1395.5" y1="168.5" x2="1399.5" y2="168.5"/>
<line x1="1395.5" y1="228.5" x2="1399.5" y2="228.5"/>
<line x1="1395.5" y1="288.5" x2="1399.5" y2="288.5"/>
<line x1="1395.5" y1="348.5" x2="1399.5" y2="348.5"/>
<line x1="1395.5" y1="408.5" x2="1399.5" y2="408.5"/>
<line x1="1395.5" y1="468.5" x2="1399.5" y2="468.5"/>
<line x1="1395.5" y1="528.5" x2="1399.5" y2="528.5"/>
<line x1="1395.5" y1="588.5" x2="1399.5" y2="588.5"/>
<line x1="1395.5" y1="648.5" x2="1399.5" y2="648.5"/>
<line x1="1395.5" y1="708.5" x2="1399.5" y2="708.5"/>
<line x1="1395.5" y1="768.5" x2="1399.5" y2="768.5"/>
<line x1="1391.5" y1="48.5" x2="1395.5" y2="48.5"/>
<line x1="1391.5" y1="768.5" x2="1395.5" y2="768.5"/>
<line x1="151.5" y1="769" x2="151.5" y2="773"/>
<line x1="200.5" y1="769" x2="200.5" y2="773"/>
<line x1="249.5" y1="769" x2="249.5" y2="773"/>
<line x1="297.5" y1="769" x2="297.5" y2="773"/>
<line x1="346.5" y1="769" x2="346.5" y2="773"/>
<line x1="395.5" y1="769" x2="395.5" y2="773"/>
<line x1="443.5" y1="769" x2="443.5" y2="773"/>
<line x1="492.5" y1="769" x2="492.5" y2="773"/>
<line x1="541.5" y1="769" x2="541.5" y2="773"/>
<line x1="590.5" y1="769" x2="590.5" y2="773"/>
<line x1="639.5" y1="769" x2="639.5" y2="773"/>
<line x1="687.5" y1="769" x2="687.5" y2="773"/>
<line x1="736.5" y1="769" x2="736.5" y2="773"/>
<line x1="785.5" y1="769" x2="785.5" y2="773"/>
<line x1="833.5" y1="769" x2="833.5" y2="773"/>
<line x1="882.5" y1="769" x2="882.5" y2="773"/>
<line x1="931.5" y1="769" x2="931.5" y2="773"/>
<line x1="980.5" y1="769" x2="980.5" y2="773"/>
<line x1="1029.5" y1="769" x2="1029.5" y2="773"/>
<line x1="1077.5" y1="769" x2="1077.5" y2="773"/>
<line x1="1126.5" y1="769" x2="1126.5" y2="773"/>
<line x1="1175.5" y1="769" x2="1175.5" y2="773"/>
<line x1="1223.5" y1="769" x2="1223.5" y2="773"/>
<line x1="1272.5" y1="769" x2="1272.5" y2="773"/>
<line x1="1321.5" y1="769" x2="1321.5" y2="773"/>
</g>
<rect x="152" y="767" width="174" height="1" fill="#00E0FF" shape-rendering="crispEdges"/>
<rect x="326" y="767" width="995" height="3" fill="#00E0FF" shape-rendering="crispEdges"/>
<g font-family='"Liberation Sans", sans-serif'>
<text x="34.5" y="52" fill="#0000FF" font-size="10.7" text-anchor="end" font-weight="normal">35.0</text>
<text x="34.5" y="132" fill="#0000FF" font-size="10.7" text-anchor="end" font-weight="normal">30.0</text>
<text x="34.5" y="212" fill="#0000FF" font-size="10.7" text-anchor="end" font-weight="normal">25.0</text>
<text x="34.5" y="292" fill="#0000FF" font-size="10.7" text-anchor="end" font-weight="normal">20.0</text>
<text x="34.5" y="372" fill="#0000FF" font-size="10.7" text-anchor="end" font-weight="normal">15.0</text>
<text x="34.5" y="452" fill="#0000FF" font-size="10.7" text-anchor="end" font-weight="normal">10.0</text>
<text x="34.5" y="532" fill="#0000FF" font-size="10.7" text-anchor="end" font-weight="normal">5.0</text>
<text x="34.5" y="612" fill="#0000FF" font-size="10.7" text-anchor="end" font-weight="normal">0.0</text>
<text x="34.5" y="692" fill="#0000FF" font-size="10.7" text-anchor="end" font-weight="normal">-5.0</text>
<text x="34.5" y="772" fill="#0000FF" font-size="10.7" text-anchor="end" font-weight="normal">-10.0</text>
<text x="71" y="52" fill="#00E030" font-size="10.7" text-anchor="end" font-weight="normal">1040</text>
<text x="71" y="112" fill="#00E030" font-size="10.7" text-anchor="end" font-weight="normal">1035</text>
<text x="71" y="172" fill="#00E030" font-size="10.7" text-anchor="end" font-weight="normal">1030</text>
<text x="71" y="232" fill="#00E030" font-size="10.7" text-anchor="end" font-weight="normal">1025</text>
<text x="71" y="292" fill="#00E030" font-size="10.7" text-anchor="end" font-weight="normal">1020</text>
<text x="71" y="352" fill="#00E030" font-size="10.7" text-anchor="end" font-weight="normal">1015</text>
<text x="71" y="412" fill="#00E030" font-size="10.7" text-anchor="end" font-weight="normal">1010</text>
<text x="71" y="472" fill="#00E030" font-size="10.7" text-anchor="end" font-weight="normal">1005</text>
<text x="71" y="532" fill="#00E030" font-size="10.7" text-anchor="end" font-weight="normal">1000</text>
<text x="71" y="592" fill="#00E030" font-size="10.7" text-anchor="end" font-weight="normal">995</text>
<text x="71" y="652" fill="#00E030" font-size="10.7" text-anchor="end" font-weight="normal">990</text>
<text x="71" y="712" fill="#00E030" font-size="10.7" text-anchor="end" font-weight="normal">985</text>
<text x="71" y="772" fill="#00E030" font-size="10.7" text-anchor="end" font-weight="normal">980</text>
<text x="108.5" y="52" fill="#000" font-size="10.7" text-anchor="end" font-weight="normal">40.0</text>
<text x="108.5" y="142" fill="#000" font-size="10.7" text-anchor="end" font-weight="normal">35.0</text>
<text x="108.5" y="232" fill="#000" font-size="10.7" text-anchor="end" font-weight="normal">30.0</text>
<text x="108.5" y="322" fill="#000" font-size="10.7" text-anchor="end" font-weight="normal">25.0</text>
<text x="108.5" y="412" fill="#000" font-size="10.7" text-anchor="end" font-weight="normal">20.0</text>
<text x="108.5" y="502" fill="#000" font-size="10.7" text-anchor="end" font-weight="normal">15.0</text>
<text x="108.5" y="592" fill="#000" font-size="10.7" text-anchor="end" font-weight="normal">10.0</text>
<text x="108.5" y="682" fill="#000" font-size="10.7" text-anchor="end" font-weight="normal">5.0</text>
<text x="108.5" y="772" fill="#000" font-size="10.7" text-anchor="end" font-weight="normal">0.0</text>
<text x="145.5" y="52" fill="#F0D000" font-size="10.7" text-anchor="end" font-weight="normal">20</text>
<text x="145.5" y="232" fill="#F0D000" font-size="10.7" text-anchor="end" font-weight="normal">15</text>
<text x="145.5" y="412" fill="#F0D000" font-size="10.7" text-anchor="end" font-weight="normal">10</text>
<text x="145.5" y="592" fill="#F0D000" font-size="10.7" text-anchor="end" font-weight="normal">5</text>
<text x="145.5" y="772" fill="#F0D000" font-size="10.7" text-anchor="end" font-weight="normal">0</text>
<text x="1327" y="52" fill="#804000" font-size="10.7" text-anchor="start" font-weight="normal">100</text>
<text x="1327" y="124" fill="#804000" font-size="10.7" text-anchor="start" font-weight="normal">90</text>
<text x="1327" y="196" fill="#804000" font-size="10.7" text-anchor="start" font-weight="normal">80</text>
<text x="1327" y="268" fill="#804000" font-size="10.7" text-anchor="start" font-weight="normal">70</text>
<text x="1327" y="340" fill="#804000" font-size="10.7" text-anchor="start" font-weight="normal">60</text>
<text x="1327" y="412" fill="#804000" font-size="10.7" text-anchor="start" font-weight="normal">50</text>
<text x="1327" y="484" fill="#804000" font-size="10.7" text-anchor="start" font-weight="normal">40</text>
<text x="1327" y="556" fill="#804000" font-size="10.7" text-anchor="start" font-weight="normal">30</text>
<text x="1327" y="628" fill="#804000" font-size="10.7" text-anchor="start" font-weight="normal">20</text>
<text x="1327" y="700" fill="#804000" font-size="10.7" text-anchor="start" font-weight="normal">10</text>
<text x="1327" y="772" fill="#804000" font-size="10.7" text-anchor="start" font-weight="normal">0</text>
<text x="1364" y="52" fill="#00D8F0" font-size="10.7" text-anchor="start" font-weight="normal">40.0</text>
<text x="1364" y="232" fill="#00D8F0" font-size="10.7" text-anchor="start" font-weight="normal">30.0</text>
<text x="1364" y="412" fill="#00D8F0" font-size="10.7" text-anchor="start" font-weight="normal">20.0</text>
<text x="1364" y="592" fill="#00D8F0" font-size="10.7" text-anchor="start" font-weight="normal">10.0</text>
<text x="1364" y="772" fill="#00D8F0" font-size="10.7" text-anchor="start" font-weight="normal">0.0</text>
<text x="1401" y="52" fill="#808080" font-size="10.7" text-anchor="start" font-weight="normal">360</text>
<text x="1422" y="52" fill="#808080" font-size="10.7" text-anchor="start" font-weight="normal">N</text>
<text x="1401" y="112" fill="#808080" font-size="10.7" text-anchor="start" font-weight="normal">330</text>
<text x="1401" y="172" fill="#808080" font-size="10.7" text-anchor="start" font-weight="normal">300</text>
<text x="1401" y="232" fill="#808080" font-size="10.7" text-anchor="start" font-weight="normal">270</text>
<text x="1422" y="232" fill="#808080" font-size="10.7" text-anchor="start" font-weight="normal">W</text>
<text x="1401" y="292" fill="#808080" font-size="10.7" text-anchor="start" font-weight="normal">240</text>
<text x="1401" y="352" fill="#808080" font-size="10.7" text-anchor="start" font-weight="normal">210</text>
<text x="1401" y="412" fill="#808080" font-size="10.7" text-anchor="start" font-weight="normal">180</text>
<text x="1422" y="412" fill="#808080" font-size="10.7" text-anchor="start" font-weight="normal">S</text>
<text x="1401" y="472" fill="#808080" font-size="10.7" text-anchor="start" font-weight="normal">150</text>
<text x="1401" y="532" fill="#808080" font-size="10.7" text-anchor="start" font-weight="normal">120</text>
<text x="1401" y="592" fill="#808080" font-size="10.7" text-anchor="start" font-weight="normal">90</text>
<text x="1422" y="592" fill="#808080" font-size="10.7" text-anchor="start" font-weight="normal">O</text>
<text x="1401" y="652" fill="#808080" font-size="10.7" text-anchor="start" font-weight="normal">60</text>
<text x="1401" y="712" fill="#808080" font-size="10.7" text-anchor="start" font-weight="normal">30</text>
<text x="1401" y="772" fill="#808080" font-size="10.7" text-anchor="start" font-weight="normal">0</text>
<text x="1422" y="772" fill="#808080" font-size="10.7" text-anchor="start" font-weight="normal">N</text>
<text x="20" y="37" fill="#0000FF" font-size="10.7" text-anchor="start" font-weight="normal">°C</text>
<text x="48" y="37" fill="#00E030" font-size="10.7" text-anchor="start" font-weight="normal">hPa</text>
<text x="79" y="37" fill="#000" font-size="11.3" text-anchor="start" font-weight="normal">km/h</text>
<text x="125.5" y="37" fill="#F0D000" font-size="10.7" text-anchor="start" font-weight="normal">min</text>
<text x="1322" y="37" fill="#804000" font-size="10.7" text-anchor="start" font-weight="normal">%</text>
<text x="1358.5" y="37" fill="#00D8F0" font-size="10.7" text-anchor="start" font-weight="normal">l/m²</text>
<text x="1396" y="37" fill="#808080" font-size="10.7" text-anchor="start" font-weight="normal">°</text>
<text x="643.5" y="20.7" fill="#000" font-size="15.8" text-anchor="start" font-weight="normal">Dienstag, 03.03.2026</text>
<text x="1258.5" y="16" fill="#000" font-size="10.6" text-anchor="start" font-weight="normal">Wetterstation Niedersorpe 440m NN</text>
<text x="151.5" y="787" fill="#000" font-size="10.7" text-anchor="middle" font-weight="normal">00:00</text>
<text x="200.5" y="787" fill="#000" font-size="10.7" text-anchor="middle" font-weight="normal">01:00</text>
<text x="249.5" y="787" fill="#000" font-size="10.7" text-anchor="middle" font-weight="normal">02:00</text>
<text x="297.5" y="787" fill="#000" font-size="10.7" text-anchor="middle" font-weight="normal">03:00</text>
<text x="346.5" y="787" fill="#000" font-size="10.7" text-anchor="middle" font-weight="normal">04:00</text>
<text x="395.5" y="787" fill="#000" font-size="10.7" text-anchor="middle" font-weight="normal">05:00</text>
<text x="443.5" y="787" fill="#000" font-size="10.7" text-anchor="middle" font-weight="normal">06:00</text>
<text x="492.5" y="787" fill="#000" font-size="10.7" text-anchor="middle" font-weight="normal">07:00</text>
<text x="541.5" y="787" fill="#000" font-size="10.7" text-anchor="middle" font-weight="normal">08:00</text>
<text x="590.5" y="787" fill="#000" font-size="10.7" text-anchor="middle" font-weight="normal">09:00</text>
<text x="639.5" y="787" fill="#000" font-size="10.7" text-anchor="middle" font-weight="normal">10:00</text>
<text x="687.5" y="787" fill="#000" font-size="10.7" text-anchor="middle" font-weight="normal">11:00</text>
<text x="736.5" y="787" fill="#000" font-size="10.7" text-anchor="middle" font-weight="normal">12:00</text>
<text x="785.5" y="787" fill="#000" font-size="10.7" text-anchor="middle" font-weight="normal">13:00</text>
<text x="833.5" y="787" fill="#000" font-size="10.7" text-anchor="middle" font-weight="normal">14:00</text>
<text x="882.5" y="787" fill="#000" font-size="10.7" text-anchor="middle" font-weight="normal">15:00</text>
<text x="931.5" y="787" fill="#000" font-size="10.7" text-anchor="middle" font-weight="normal">16:00</text>
<text x="980.5" y="787" fill="#000" font-size="10.7" text-anchor="middle" font-weight="normal">17:00</text>
<text x="1029.5" y="787" fill="#000" font-size="10.7" text-anchor="middle" font-weight="normal">18:00</text>
<text x="1077.5" y="787" fill="#000" font-size="10.7" text-anchor="middle" font-weight="normal">19:00</text>
<text x="1126.5" y="787" fill="#000" font-size="10.7" text-anchor="middle" font-weight="normal">20:00</text>
<text x="1175.5" y="787" fill="#000" font-size="10.7" text-anchor="middle" font-weight="normal">21:00</text>
<text x="1223.5" y="787" fill="#000" font-size="10.7" text-anchor="middle" font-weight="normal">22:00</text>
<text x="1272.5" y="787" fill="#000" font-size="10.7" text-anchor="middle" font-weight="normal">23:00</text>
<text x="1321.5" y="787" fill="#000" font-size="10.7" text-anchor="middle" font-weight="normal">24:00</text>
</g>
<g font-family='"Liberation Sans", sans-serif'>
<rect x="161.5" y="33.5" width="9" height="9" fill="#0000FF" stroke="#000" stroke-width="1" shape-rendering="crispEdges"/>
<text x="176" y="42" fill="#0000FF" font-size="10.8" text-anchor="start" font-weight="normal">Temp. 2m*</text>
<rect x="256.5" y="33.5" width="9" height="9" fill="#FF0000" stroke="#000" stroke-width="1" shape-rendering="crispEdges"/>
<text x="271" y="42" fill="#0000FF" font-size="10.8" text-anchor="start" font-weight="normal">Temp. 5cm*</text>
<rect x="351.5" y="33.5" width="9" height="9" fill="#804000" stroke="#000" stroke-width="1" shape-rendering="crispEdges"/>
<text x="366" y="42" fill="#804000" font-size="10.8" text-anchor="start" font-weight="normal">Feuchte A.*</text>
<rect x="446.5" y="33.5" width="9" height="9" fill="#00FF40" stroke="#000" stroke-width="1" shape-rendering="crispEdges"/>
<text x="461" y="42" fill="#00E030" font-size="10.8" text-anchor="start" font-weight="normal">Luftdruck*</text>
<rect x="541.5" y="33.5" width="9" height="9" fill="#00E0FF" stroke="#000" stroke-width="1" shape-rendering="crispEdges"/>
<text x="556" y="42" fill="#00D8F0" font-size="10.8" text-anchor="start" font-weight="normal">Regen*</text>
<rect x="636.5" y="33.5" width="9" height="9" fill="#000000" stroke="#000" stroke-width="1" shape-rendering="crispEdges"/>
<text x="651" y="42" fill="#000" font-size="10.8" text-anchor="start" font-weight="normal">Wind</text>
<rect x="731.5" y="33.5" width="9" height="9" fill="#808080" stroke="#000" stroke-width="1" shape-rendering="crispEdges"/>
<text x="746" y="42" fill="#909090" font-size="10.8" text-anchor="start" font-weight="normal">Richtung*</text>
<rect x="826.5" y="33.5" width="9" height="9" fill="#FFE600" stroke="#000" stroke-width="1" shape-rendering="crispEdges"/>
<text x="841" y="42" fill="#F0D000" font-size="10.8" text-anchor="start" font-weight="normal">Sonnenschein</text>
<rect x="921.5" y="33.5" width="9" height="9" fill="#008040" stroke="#000" stroke-width="1" shape-rendering="crispEdges"/>
<text x="936" y="42" fill="#0000FF" font-size="10.8" text-anchor="start" font-weight="normal">Taupunkt*</text>
<rect x="1016.5" y="33.5" width="9" height="9" fill="#FF8000" stroke="#000" stroke-width="1" shape-rendering="crispEdges"/>
<text x="1031" y="42" fill="#0000FF" font-size="10.8" text-anchor="start" font-weight="normal">Windchill</text>
<rect x="1111.5" y="33.5" width="9" height="9" fill="#8000FF" stroke="#000" stroke-width="1" shape-rendering="crispEdges"/>
<text x="1126" y="42" fill="#000" font-size="10.8" text-anchor="start" font-weight="normal">Windböen</text>
</g>
<g shape-rendering="crispEdges">
<rect x="493" y="764" width="2" height="12" fill="#808080"/>
<rect x="497" y="764" width="2" height="12" fill="#FFE600"/>
<rect x="1036" y="764" width="2" height="12" fill="#FFE600"/>
<rect x="1049" y="764" width="2" height="12" fill="#808080"/>
<rect x="767" y="770" width="2" height="7" fill="#000"/>
</g>
<circle cx="768.5" cy="793.5" r="5" fill="none" stroke="#000" stroke-width="1.4"/>
<g font-family='"Liberation Sans", sans-serif'>
<text x="10" y="797.5" fill="#000" font-size="10.7" text-anchor="start" font-weight="normal">11:03</text>
<text x="464.5" y="797.5" fill="#000" font-size="10.7" text-anchor="start" font-weight="normal">07:07</text>
<text x="502" y="797.5" fill="#000" font-size="10.7" text-anchor="start" font-weight="normal">07:02</text>
<text x="1003.5" y="797.5" fill="#000" font-size="10.7" text-anchor="start" font-weight="normal">18:10</text>
<text x="1058.5" y="797.5" fill="#000" font-size="10.7" text-anchor="start" font-weight="normal">18:27</text>
</g>
<path d="M40,797 L40,794 Q42,790 45,791 Q48,790 49,794 L49,797 Z" fill="#FFE600"/>
<circle cx="498" cy="793" r="4" fill="#FFE600"/><rect x="494" y="794" width="5" height="4" fill="#6070c0" opacity="0.5"/>
<rect x="1034.5" y="790.5" width="6" height="6" fill="none" stroke="#FFE600"/>
<rect x="1045.5" y="788.5" width="6" height="5" fill="none" stroke="#6070d0" stroke-dasharray="1 1"/>
<path d="M1053,791 L1056,796 L1054.5,796 L1054.5,799 L1051.5,799 L1051.5,796 L1050,796 Z" fill="#E8D000"/>
</svg>
</body></html>
